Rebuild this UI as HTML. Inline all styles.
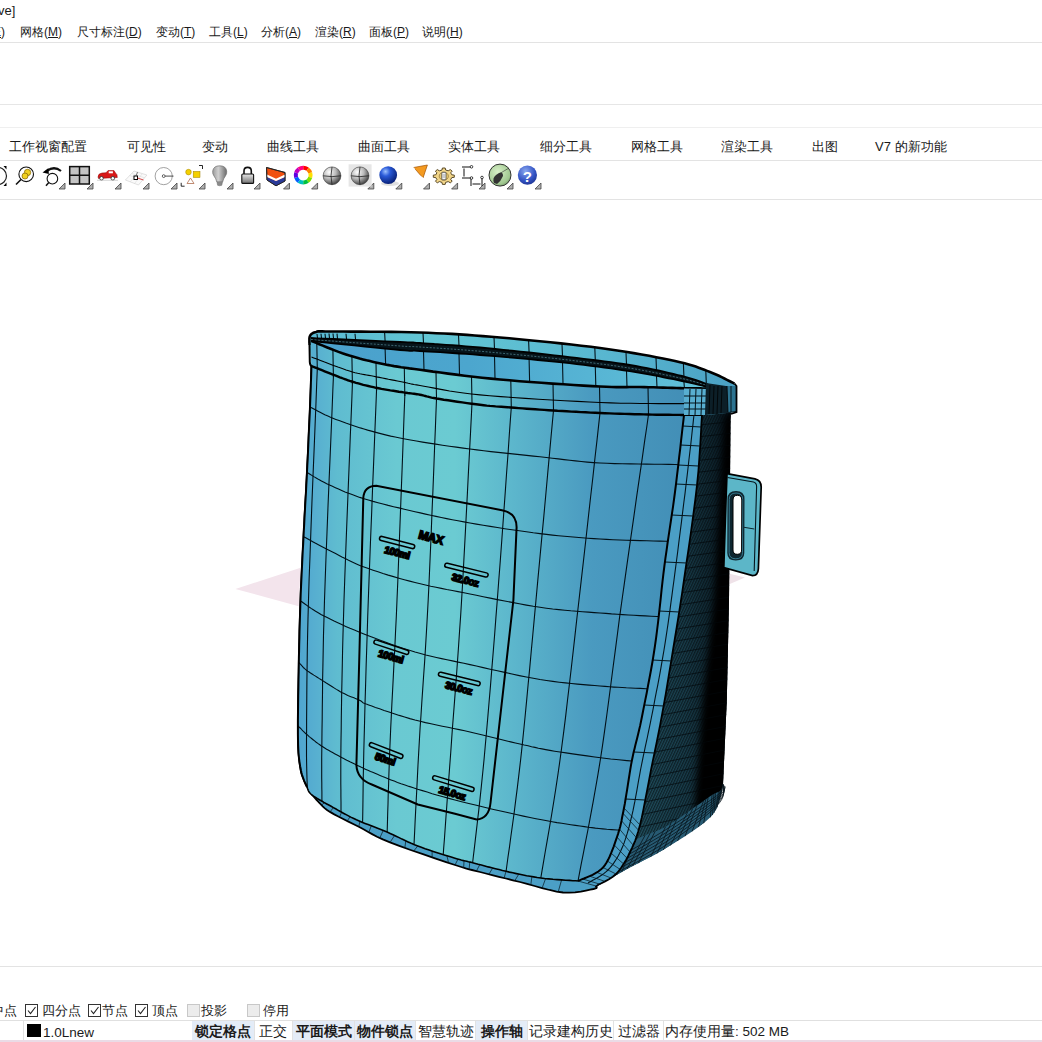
<!DOCTYPE html>
<html><head><meta charset="utf-8">
<style>
html,body{margin:0;padding:0;width:1042px;height:1042px;overflow:hidden;background:#fff;font-family:"Liberation Sans",sans-serif;color:#1a1a1a}
.t{position:absolute;white-space:nowrap;font-size:12px;line-height:14px}
.hl{position:absolute;left:0;width:1042px;height:1px;background:#e3e3e3}
.ic{position:absolute;top:163px;width:28px;height:30px}
.tri{position:absolute;width:0;height:0;border-left:5px solid transparent;border-bottom:5px solid #555}
.cb{position:absolute;top:1004px;width:11px;height:11px;border:1px solid #333;background:#fff}
.cb.d{border-color:#c8c8c8;background:#ececec}
.sb{position:absolute;top:1021px;height:19px;font-size:13.5px;line-height:22px;padding:0}
.sb.on{background:#e4ecf7;font-weight:bold}
.sep{position:absolute;top:1021px;width:1px;height:19px;background:#e2e2e2}
</style></head><body>
<!-- title -->
<div class="t" style="left:-2px;top:4px;font-size:13px">ve]</div>
<!-- menu -->
<div class="t" style="left:-11px;top:25px">(<u>E</u>)</div>
<div class="t" style="left:20px;top:25px">网格(<u>M</u>)</div>
<div class="t" style="left:77px;top:25px">尺寸标注(<u>D</u>)</div>
<div class="t" style="left:156px;top:25px">变动(<u>T</u>)</div>
<div class="t" style="left:209px;top:25px">工具(<u>L</u>)</div>
<div class="t" style="left:261px;top:25px">分析(<u>A</u>)</div>
<div class="t" style="left:315px;top:25px">渲染(<u>R</u>)</div>
<div class="t" style="left:369px;top:25px">面板(<u>P</u>)</div>
<div class="t" style="left:422px;top:25px">说明(<u>H</u>)</div>
<div class="hl" style="top:42px"></div>
<div class="hl" style="top:104px;background:#e6e6e6"></div>
<div class="hl" style="top:127px;background:#efefef"></div>
<!-- tabs -->
<div class="t" style="left:9px;top:140px;font-size:13px">工作视窗配置</div>
<div class="t" style="left:127px;top:140px;font-size:13px">可见性</div>
<div class="t" style="left:202px;top:140px;font-size:13px">变动</div>
<div class="t" style="left:267px;top:140px;font-size:13px">曲线工具</div>
<div class="t" style="left:358px;top:140px;font-size:13px">曲面工具</div>
<div class="t" style="left:448px;top:140px;font-size:13px">实体工具</div>
<div class="t" style="left:540px;top:140px;font-size:13px">细分工具</div>
<div class="t" style="left:631px;top:140px;font-size:13px">网格工具</div>
<div class="t" style="left:721px;top:140px;font-size:13px">渲染工具</div>
<div class="t" style="left:812px;top:140px;font-size:13px">出图</div>
<div class="t" style="left:875px;top:140px;font-size:13px">V7 的新功能</div>
<div class="hl" style="top:160px"></div>
<svg width="1042" height="40" viewBox="0 160 1042 40" style="position:absolute;left:0;top:160px">
<defs>
<radialGradient id="gs" cx="0.35" cy="0.3" r="0.75"><stop offset="0" stop-color="#fff"/><stop offset="0.5" stop-color="#b8b8b8"/><stop offset="1" stop-color="#3a3a3a"/></radialGradient>
<radialGradient id="gb" cx="0.35" cy="0.3" r="0.75"><stop offset="0" stop-color="#9cc0ff"/><stop offset="0.35" stop-color="#2a5ad8"/><stop offset="1" stop-color="#061c70"/></radialGradient>
<radialGradient id="gq" cx="0.4" cy="0.3" r="0.8"><stop offset="0" stop-color="#8aa8f0"/><stop offset="0.6" stop-color="#3454c4"/><stop offset="1" stop-color="#1a2e8a"/></radialGradient>
<radialGradient id="gg" cx="0.4" cy="0.35" r="0.8"><stop offset="0" stop-color="#d8f0c8"/><stop offset="0.7" stop-color="#a0c890"/><stop offset="1" stop-color="#5c7c50"/></radialGradient>
<linearGradient id="gl" x1="0" y1="0" x2="0" y2="1"><stop offset="0" stop-color="#e8e8e8"/><stop offset="1" stop-color="#707070"/></linearGradient>
<linearGradient id="gbulb" x1="0" y1="0" x2="1" y2="0"><stop offset="0" stop-color="#9a9a9a"/><stop offset="0.4" stop-color="#d0d0d0"/><stop offset="1" stop-color="#6a6a6a"/></linearGradient>
</defs>
<path d="M65.0,183 L65.0,189 L59.0,189 Z" fill="#b0b0b0" stroke="#444" stroke-width="0.8"/>
<path d="M93.0,183 L93.0,189 L87.0,189 Z" fill="#b0b0b0" stroke="#444" stroke-width="0.8"/>
<path d="M121.0,183 L121.0,189 L115.0,189 Z" fill="#b0b0b0" stroke="#444" stroke-width="0.8"/>
<path d="M149.0,183 L149.0,189 L143.0,189 Z" fill="#b0b0b0" stroke="#444" stroke-width="0.8"/>
<path d="M177.0,183 L177.0,189 L171.0,189 Z" fill="#b0b0b0" stroke="#444" stroke-width="0.8"/>
<path d="M205.0,183 L205.0,189 L199.0,189 Z" fill="#b0b0b0" stroke="#444" stroke-width="0.8"/>
<path d="M233.0,183 L233.0,189 L227.0,189 Z" fill="#b0b0b0" stroke="#444" stroke-width="0.8"/>
<path d="M260.0,183 L260.0,189 L254.0,189 Z" fill="#b0b0b0" stroke="#444" stroke-width="0.8"/>
<path d="M289.5,183 L289.5,189 L283.5,189 Z" fill="#b0b0b0" stroke="#444" stroke-width="0.8"/>
<path d="M317.6,183 L317.6,189 L311.6,189 Z" fill="#b0b0b0" stroke="#444" stroke-width="0.8"/>
<path d="M373.8,183 L373.8,189 L367.8,189 Z" fill="#b0b0b0" stroke="#444" stroke-width="0.8"/>
<path d="M401.8,183 L401.8,189 L395.8,189 Z" fill="#b0b0b0" stroke="#444" stroke-width="0.8"/>
<path d="M429.5,183 L429.5,189 L423.5,189 Z" fill="#b0b0b0" stroke="#444" stroke-width="0.8"/>
<path d="M457.6,183 L457.6,189 L451.6,189 Z" fill="#b0b0b0" stroke="#444" stroke-width="0.8"/>
<path d="M485.0,183 L485.0,189 L479.0,189 Z" fill="#b0b0b0" stroke="#444" stroke-width="0.8"/>
<path d="M513.0,183 L513.0,189 L507.0,189 Z" fill="#b0b0b0" stroke="#444" stroke-width="0.8"/>
<path d="M541.0,183 L541.0,189 L535.0,189 Z" fill="#b0b0b0" stroke="#444" stroke-width="0.8"/>
<path d="M-2,167.5 A8.5,8.5 0 0 1 -2,184.5" fill="none" stroke="#222" stroke-width="1.2"/>
<path d="M3.5,166 L6.5,166 L6.5,169.5 Z M3.5,186 L6.5,186 L6.5,182.5 Z" fill="#000"/>
<circle cx="26.2" cy="174.3" r="7.3" fill="#fff" stroke="#111" stroke-width="1.1"/>
<circle cx="27.5" cy="172.5" r="3.2" fill="#f0d020" stroke="#806000" stroke-width="0.7"/><circle cx="25" cy="176" r="3" fill="#f0d020" stroke="#806000" stroke-width="0.7"/>
<path d="M16,184.5 L21,179.5" stroke="#111" stroke-width="1.6"/>
<circle cx="52.4" cy="178.7" r="5.3" fill="#fff" stroke="#111" stroke-width="1.1"/>
<path d="M46,185.8 L48.8,182.6" stroke="#111" stroke-width="1.5"/>
<path d="M47,171 Q54,165.5 61,171" fill="none" stroke="#111" stroke-width="2.2"/>
<path d="M42.5,172.5 L48.5,168 L48.8,174 Z" fill="#000"/>
<rect x="69.7" y="166.6" width="19.6" height="17.4" fill="#c4c4c4" stroke="#111" stroke-width="1.5"/>
<path d="M79.5,166.6 L79.5,184 M69.7,175.3 L89.3,175.3" stroke="#111" stroke-width="1.5"/>
<path d="M98,177 Q98,173.5 102,173 L106,172.8 L108,170.6 L114,170.6 L115.5,173 Q117.5,174 117.3,177.5 L98.5,178.5 Z" fill="#d81818" stroke="#8a0000" stroke-width="0.5"/>
<rect x="108.7" y="171.3" width="4.2" height="2" fill="#fff"/>
<circle cx="101.5" cy="178.3" r="1.8" fill="#fff" stroke="#333" stroke-width="0.9"/><circle cx="112.8" cy="178.3" r="1.8" fill="#fff" stroke="#333" stroke-width="0.9"/>
<path d="M97,180.3 L118,180.3" stroke="#bbb" stroke-width="0.6"/>
<path d="M125.4,180 L134,171 L146.9,175 L138.5,185 Z" fill="#fafafa" stroke="#ccc" stroke-width="0.6"/>
<path d="M129.7,175.5 L142.7,180 M132,173.5 L144.5,177.8 M130,182 L138,173 M134.5,183.5 L142,174" stroke="#d4d4d4" stroke-width="0.5"/>
<rect x="134" y="176" width="3.5" height="3.5" fill="#fff" stroke="#000" stroke-width="1"/>
<path d="M137.5,178 L143.5,180" stroke="#d02020" stroke-width="0.8"/><path d="M136,176 L137.5,172" stroke="#333" stroke-width="0.6"/>
<circle cx="163.7" cy="176.1" r="8.6" fill="none" stroke="#8a8a8a" stroke-width="0.8"/>
<circle cx="163.7" cy="176.1" r="1.4" fill="#fff" stroke="#222" stroke-width="0.7"/><path d="M165.1,176.1 L173.5,176.1" stroke="#222" stroke-width="0.8"/>
<circle cx="188.5" cy="172.1" r="2.8" fill="#f4d000" stroke="#a08000" stroke-width="0.5"/>
<rect x="193.2" y="171.4" width="6.8" height="6.1" fill="#f4d000" stroke="#a08000" stroke-width="0.5"/>
<path d="M187,183.5 L190.5,178 L194,183.5 Z" fill="none" stroke="#b07050" stroke-width="0.8"/>
<path d="M199,165.5 L202.5,165.5 L202.5,169 M181.2,182.8 L181.2,186.2 L184.6,186.2" fill="none" stroke="#111" stroke-width="0.9"/>
<path d="M216.8,182 Q216,178.5 214,176 Q212.3,173.5 212.7,171 Q213.5,165.8 219.7,165.8 Q225.9,165.8 226.7,171 Q227.1,173.5 225.4,176 Q223.4,178.5 222.6,182 Z" fill="url(#gbulb)" stroke="#707070" stroke-width="0.7"/>
<path d="M217,182.2 L222.4,182.2 L221.8,185.3 Q219.7,186.2 217.6,185.3 Z" fill="#8a8a8a" stroke="#666" stroke-width="0.5"/>
<path d="M244,174 L244,171 Q244,167.4 247.6,167.4 Q251.3,167.4 251.3,171 L251.3,174" fill="none" stroke="#111" stroke-width="1.6"/>
<rect x="241.8" y="174" width="11.8" height="9.4" rx="1" fill="url(#gl)" stroke="#111" stroke-width="1.1"/>
<path d="M266.5,167.5 L285,172.5 L285,181 L276,185.8 L267,180 Z" fill="#f05010" stroke="#222" stroke-width="0.9"/>
<path d="M267,177 L276,181 L285,177 L285,181 L276,185.8 L267,180 Z" fill="#2a3a98"/>
<path d="M267,174.5 L276,178.8 L285,174.5 L285,177 L276,181 L267,177 Z" fill="#fff"/>
<path d="M266.5,167.5 L285,172.5 L285,181 L276,185.8 L267,180 Z" fill="none" stroke="#222" stroke-width="0.9"/>
<path d="M303.20,167.70 A7.4,7.4 0 0 1 307.55,169.11" fill="none" stroke="#ff0000" stroke-width="4"/>
<path d="M307.55,169.11 A7.4,7.4 0 0 1 310.24,172.81" fill="none" stroke="#ff8000" stroke-width="4"/>
<path d="M310.24,172.81 A7.4,7.4 0 0 1 310.24,177.39" fill="none" stroke="#ffe000" stroke-width="4"/>
<path d="M310.24,177.39 A7.4,7.4 0 0 1 307.55,181.09" fill="none" stroke="#80e000" stroke-width="4"/>
<path d="M307.55,181.09 A7.4,7.4 0 0 1 303.20,182.50" fill="none" stroke="#00c040" stroke-width="4"/>
<path d="M303.20,182.50 A7.4,7.4 0 0 1 298.85,181.09" fill="none" stroke="#00c0c0" stroke-width="4"/>
<path d="M298.85,181.09 A7.4,7.4 0 0 1 296.16,177.39" fill="none" stroke="#0060ff" stroke-width="4"/>
<path d="M296.16,177.39 A7.4,7.4 0 0 1 296.16,172.81" fill="none" stroke="#6000e0" stroke-width="4"/>
<path d="M296.16,172.81 A7.4,7.4 0 0 1 298.85,169.11" fill="none" stroke="#c000c0" stroke-width="4"/>
<path d="M298.85,169.11 A7.4,7.4 0 0 1 303.20,167.70" fill="none" stroke="#ff0080" stroke-width="4"/>
<circle cx="332" cy="175.8" r="8.9" fill="url(#gs)" stroke="#333" stroke-width="0.6"/>
<path d="M332,167 Q330,175.8 332,184.7 M323.1,175.8 Q332,177.5 340.9,175.8" fill="none" stroke="#222" stroke-width="0.8"/>
<rect x="348.6" y="164.3" width="23" height="22.3" fill="#e6e6e6"/>
<circle cx="360" cy="175.8" r="8.9" fill="url(#gs)" stroke="#333" stroke-width="0.6"/>
<path d="M360,167 Q358,175.8 360,184.7 M351.1,175.8 Q360,177.5 368.9,175.8" fill="none" stroke="#222" stroke-width="0.8"/>
<ellipse cx="390" cy="183.5" rx="9" ry="2.5" fill="#ccc" opacity="0.6"/>
<circle cx="388.2" cy="175.1" r="8.9" fill="url(#gb)"/>
<path d="M413.7,167.5 L427.4,165 L423,178 Z" fill="#f49a20" stroke="#a05000" stroke-width="0.7"/>
<path d="M413.7,167.5 Q416,174 423,178" fill="none" stroke="#fff" stroke-width="1"/>
<polygon points="451.8,174.8 454.3,175.1 454.3,177.3 451.8,177.6 450.7,179.6 452.2,181.2 450.3,182.8 448.2,181.6 445.6,182.4 445.2,184.4 442.4,184.4 442.0,182.4 439.4,181.6 437.3,182.8 435.4,181.2 436.9,179.6 435.8,177.6 433.3,177.3 433.3,175.1 435.8,174.8 436.9,172.8 435.4,171.2 437.3,169.6 439.4,170.8 442.0,170.0 442.4,168.0 445.2,168.0 445.6,170.0 448.2,170.8 450.3,169.6 452.2,171.2 450.7,172.8" fill="#f2d68a" stroke="#4a3a18" stroke-width="0.9" stroke-linejoin="round"/>
<ellipse cx="443.8" cy="176.2" rx="4.6" ry="4" fill="#e8c870" stroke="#6a5020" stroke-width="0.5"/>
<rect x="441.8" y="172.3" width="4.2" height="7.5" rx="0.8" fill="#f4f4f4" stroke="#333" stroke-width="0.7"/>
<path d="M442.8,175 L445,175 M442.8,177 L445,177" stroke="#555" stroke-width="0.5"/>
<path d="M462,167 L471,167 M462,178 L471,178 M464,168.5 L464,176.5 M471,178 L471,186 M482,178 L482,186 M472.5,184 L480.5,184" stroke="#111" stroke-width="1" fill="none"/>
<circle cx="471.5" cy="166.8" r="1.3" fill="#fff" stroke="#111" stroke-width="0.8"/><circle cx="471.5" cy="178" r="1.3" fill="#fff" stroke="#111" stroke-width="0.8"/><circle cx="482" cy="177.5" r="1.3" fill="#fff" stroke="#111" stroke-width="0.8"/>
<circle cx="500" cy="175.1" r="11" fill="url(#gg)" stroke="#333" stroke-width="1"/>
<path d="M494,183 Q492,178 496,175 L499,173 Q503,171 503,176 Q501,181 497,184 Z" fill="#333"/>
<path d="M499,174 L509,168" stroke="#333" stroke-width="0.6"/>
<circle cx="527.4" cy="175.1" r="9.6" fill="url(#gq)"/>
<text x="527.4" y="181.5" font-family="Liberation Sans" font-weight="bold" font-size="15" fill="#fff" text-anchor="middle">?</text>
</svg>
<div class="hl" style="top:199px"></div>
<div class="hl" style="top:966px"></div>
<!-- osnap row -->
<div class="t" style="left:-9px;top:1004px;font-size:13px">中点</div>
<div class="cb" style="left:25px"><svg width="11" height="11" style="position:absolute;left:0;top:0"><path d="M2,5.5 L4.5,8.5 L9.5,2" fill="none" stroke="#222" stroke-width="1.1"/></svg></div><div class="t" style="left:42px;top:1004px;font-size:13px">四分点</div>
<div class="cb" style="left:88px"><svg width="11" height="11" style="position:absolute;left:0;top:0"><path d="M2,5.5 L4.5,8.5 L9.5,2" fill="none" stroke="#222" stroke-width="1.1"/></svg></div><div class="t" style="left:102px;top:1004px;font-size:13px">节点</div>
<div class="cb" style="left:135px"><svg width="11" height="11" style="position:absolute;left:0;top:0"><path d="M2,5.5 L4.5,8.5 L9.5,2" fill="none" stroke="#222" stroke-width="1.1"/></svg></div><div class="t" style="left:152px;top:1004px;font-size:13px">顶点</div>
<div class="cb d" style="left:187px"></div><div class="t" style="left:201px;top:1004px;font-size:13px">投影</div>
<div class="cb d" style="left:247px"></div><div class="t" style="left:263px;top:1004px;font-size:13px">停用</div>
<div class="hl" style="top:1020px;background:#e0e0e0"></div>
<!-- status bar -->
<div class="sep" style="left:23px"></div>
<div style="position:absolute;left:27px;top:1024px;width:14px;height:13px;background:#000"></div>
<div class="sb" style="left:43px;top:1022px">1.0Lnew</div>
<div class="sb on" style="left:192px;width:62px;text-align:center">锁定格点</div>
<div class="sep" style="left:254px"></div>
<div class="sb" style="left:254px;width:38px;text-align:center">正交</div>
<div class="sep" style="left:292px"></div>
<div class="sb on" style="left:293px;width:61px;text-align:center">平面模式</div>
<div class="sep" style="left:354px"></div>
<div class="sb on" style="left:355px;width:60px;text-align:center">物件锁点</div>
<div class="sep" style="left:415px"></div>
<div class="sb" style="left:416px;width:59px;text-align:center">智慧轨迹</div>
<div class="sep" style="left:475px"></div>
<div class="sb on" style="left:476px;width:51px;text-align:center">操作轴</div>
<div class="sep" style="left:527px"></div>
<div class="sb" style="left:528px;width:85px;text-align:center">记录建构历史</div>
<div class="sep" style="left:613px"></div>
<div class="sb" style="left:614px;width:49px;text-align:center">过滤器</div>
<div class="sep" style="left:663px"></div>
<div class="sb" style="left:665px">内存使用量: 502 MB</div>
<div style="position:absolute;left:0;top:1040px;width:1042px;height:2px;background:#eadbe6"></div>
<svg width="1042" height="1042" viewBox="0 0 1042 1042" style="position:absolute;left:0;top:0">
<defs>
<linearGradient id="gF" x1="298" y1="0" x2="690" y2="0" gradientUnits="userSpaceOnUse">
<stop offset="0" stop-color="#4fa5d0"/><stop offset="0.05" stop-color="#58b0d0"/><stop offset="0.1" stop-color="#5fbcd0"/><stop offset="0.25" stop-color="#6ac9d2"/><stop offset="0.4" stop-color="#6bcbd2"/><stop offset="0.55" stop-color="#5cb6cc"/><stop offset="0.75" stop-color="#4a9ac0"/><stop offset="1" stop-color="#428eb6"/>
</linearGradient>
<linearGradient id="gD" x1="640" y1="0" x2="729" y2="0" gradientUnits="userSpaceOnUse">
<stop offset="0" stop-color="#21505f"/><stop offset="0.5" stop-color="#193e4c"/><stop offset="0.8" stop-color="#0f2630"/><stop offset="1" stop-color="#06121a"/>
</linearGradient>
<linearGradient id="gR" x1="300" y1="0" x2="740" y2="0" gradientUnits="userSpaceOnUse">
<stop offset="0" stop-color="#5ab8d2"/><stop offset="0.3" stop-color="#62c6d4"/><stop offset="0.7" stop-color="#58b6d0"/><stop offset="1" stop-color="#4aa0c4"/>
</linearGradient>
<pattern id="hatch" width="2.4" height="6" patternUnits="userSpaceOnUse" patternTransform="rotate(25)">
<rect width="2.4" height="6" fill="none"/><rect x="0" width="1.2" height="6" fill="#03090c" opacity="0.6"/>
</pattern>
<linearGradient id="gW" x1="311" y1="0" x2="707" y2="0" gradientUnits="userSpaceOnUse">
<stop offset="0" stop-color="#4aa0cc"/><stop offset="0.4" stop-color="#4ca6ce"/><stop offset="0.7" stop-color="#56b4d4"/><stop offset="1" stop-color="#62c2d8"/>
</linearGradient>
<clipPath id="cF"><path d="M311.5,366.0 L314.1,367.0 L317.7,368.5 L321.9,370.2 L326.4,372.0 L330.7,373.7 L334.5,375.2 L337.6,376.4 L340.4,377.5 L343.1,378.5 L345.7,379.5 L348.6,380.5 L351.8,381.5 L355.4,382.6 L359.2,383.7 L363.3,384.8 L367.4,385.8 L371.7,386.8 L376.0,387.8 L380.5,388.7 L385.4,389.5 L390.3,390.4 L395.2,391.1 L399.7,391.8 L403.7,392.4 L407.1,392.9 L410.0,393.3 L412.5,393.6 L415.0,393.9 L417.4,394.3 L420.0,394.7 L422.4,395.2 L424.5,395.8 L426.6,396.4 L429.0,397.0 L432.2,397.7 L436.5,398.5 L442.3,399.4 L449.5,400.5 L457.3,401.7 L465.4,402.9 L473.2,403.9 L480.0,404.8 L485.8,405.5 L490.9,406.0 L495.6,406.4 L500.3,406.7 L505.3,407.1 L511.0,407.5 L517.3,408.0 L524.0,408.5 L531.0,409.0 L538.2,409.5 L545.6,410.0 L553.0,410.5 L560.5,411.0 L568.3,411.4 L576.1,411.8 L584.1,412.3 L592.1,412.6 L600.0,413.0 L608.1,413.3 L616.4,413.6 L624.7,413.9 L632.9,414.1 L640.7,414.3 L648.0,414.5 L655.1,414.6 L662.2,414.8 L669.0,414.8 L675.1,414.9 L680.2,415.0 L684.0,415.0 L682.9,422.3 L681.4,432.2 L679.6,444.1 L677.7,457.2 L675.7,471.1 L673.7,485.0 L671.7,499.7 L669.5,515.7 L667.3,532.5 L665.0,549.3 L662.9,565.3 L661.0,580.0 L659.3,593.3 L657.8,605.9 L656.4,617.8 L655.0,629.1 L653.6,639.8 L652.0,650.0 L650.3,659.4 L648.4,667.8 L646.5,675.6 L644.6,683.3 L642.7,691.3 L641.0,700.0 L639.4,709.6 L637.8,719.7 L636.3,730.1 L634.9,740.5 L633.4,750.6 L632.0,760.0 L630.6,768.9 L629.2,777.6 L627.9,785.9 L626.6,793.9 L625.3,801.2 L624.0,808.0 L622.9,813.9 L621.9,819.0 L620.9,823.6 L619.8,827.9 L618.6,832.3 L617.0,837.0 L615.2,842.2 L613.3,847.7 L611.1,853.2 L608.7,858.5 L606.1,863.4 L603.0,867.5 L599.2,870.9 L594.6,873.8 L589.6,876.2 L584.9,878.1 L580.8,879.7 L578.0,881.0 L573.9,880.7 L568.3,880.4 L561.6,879.9 L554.4,879.4 L547.3,878.7 L540.8,878.0 L534.8,877.1 L529.0,876.1 L523.2,875.0 L517.4,873.8 L511.7,872.6 L506.0,871.3 L500.2,869.9 L494.2,868.4 L488.2,866.9 L482.5,865.3 L477.2,863.9 L472.6,862.7 L469.0,861.8 L466.3,861.2 L464.0,860.7 L461.7,860.1 L458.9,859.3 L455.0,858.2 L449.9,856.6 L443.8,854.8 L437.2,852.7 L430.4,850.5 L423.9,848.2 L417.8,846.0 L412.3,843.8 L407.1,841.4 L402.0,839.1 L397.1,836.7 L392.1,834.3 L387.1,832.1 L381.9,830.0 L376.6,827.9 L371.3,825.8 L366.1,823.8 L361.1,821.8 L356.4,819.8 L352.1,817.8 L348.1,815.7 L344.3,813.7 L340.7,811.7 L337.1,809.7 L333.4,807.6 L329.6,805.5 L325.5,803.3 L321.6,801.0 L317.9,798.9 L314.6,796.8 L312.0,795.0 L310.2,793.3 L308.9,791.7 L308.2,790.2 L307.7,788.9 L307.4,787.8 L307.0,787.0 L306.3,785.4 L305.3,783.3 L304.2,780.8 L303.0,777.8 L301.9,774.4 L301.0,770.7 L300.3,766.9 L299.6,763.2 L299.1,759.1 L298.6,754.1 L298.2,747.9 L298.0,740.0 L297.9,729.8 L298.0,717.6 L298.1,704.1 L298.3,690.1 L298.6,676.5 L298.8,664.0 L299.0,652.6 L299.3,641.7 L299.5,631.2 L299.8,620.8 L300.1,610.5 L300.5,600.0 L300.9,589.5 L301.4,579.0 L301.9,568.6 L302.4,558.1 L303.0,547.6 L303.5,537.0 L304.1,526.3 L304.6,515.5 L305.2,504.6 L305.9,493.7 L306.4,482.9 L307.0,472.0 L307.5,460.9 L308.1,449.5 L308.6,438.0 L309.1,426.9 L309.6,416.5 L310.0,407.0 L310.4,398.2 L310.7,389.9 L310.9,382.2 L311.2,375.4 L311.4,369.7Z"/></clipPath>
</defs>
<polygon points="235.4,589 300.6,567.8 298.7,606.2" fill="#f3e4ec"/>
<polygon points="728.8,573.6 745,577.4 729.8,584" fill="#efe2e8"/>
<path d="M700.0,412.0 L731.0,412.0 L730.5,420.0 L729.0,600.0 L726.8,700.0 L723.0,784.5 L717.0,807.5 L703.7,823.0 L663.4,849.8 L627.0,869.0 L600.0,884.4 L593.5,888.6 L563.0,891.8 L590.0,870.0 L640.0,700.0 L690.0,415.0Z" fill="url(#gD)"/>
<path d="M700.0,412.0 L731.0,412.0 L730.5,420.0 L729.0,600.0 L726.8,700.0 L723.0,784.5 L717.0,807.5 L703.7,823.0 L663.4,849.8 L627.0,869.0 L600.0,884.4 L593.5,888.6 L563.0,891.8 L590.0,870.0 L640.0,700.0 L690.0,415.0Z" fill="url(#hatch)"/>
<filter id="blk" x="-50%" y="-10%" width="200%" height="120%"><feGaussianBlur stdDeviation="3"/></filter>
<g clip-path="url(#cDk0)"><path d="M740,405 L740,840 L703,826 L694,815 L703,700 L714,600 L724,418 Z" fill="#000" filter="url(#blk)"/></g>
<clipPath id="cDk0"><path d="M700.0,412.0 L731.0,412.0 L730.5,420.0 L729.0,600.0 L726.8,700.0 L723.0,784.5 L717.0,807.5 L703.7,823.0 L663.4,849.8 L627.0,869.0 L600.0,884.4 L593.5,888.6 L563.0,891.8 L590.0,870.0 L640.0,700.0 L690.0,415.0Z"/></clipPath>
<clipPath id="cDk"><path d="M700.0,412.0 L731.0,412.0 L730.5,420.0 L729.0,600.0 L726.8,700.0 L723.0,784.5 L717.0,807.5 L703.7,823.0 L663.4,849.8 L627.0,869.0 L600.0,884.4 L593.5,888.6 L563.0,891.8 L590.0,870.0 L640.0,700.0 L690.0,415.0Z"/></clipPath>
<path d="M640.0,431.0 L740.0,420.8 M640.0,443.0 L740.0,432.4 M640.0,455.0 L740.0,444.1 M640.0,467.0 L740.0,455.8 M640.0,479.0 L740.0,467.4 M640.0,491.0 L740.0,479.1 M640.0,503.0 L740.0,490.7 M640.0,515.0 L740.0,502.4 M640.0,527.0 L740.0,514.0 M640.0,539.0 L740.0,525.6 M640.0,551.0 L740.0,537.3 M640.0,563.0 L740.0,548.9 M640.0,575.0 L740.0,560.6 M640.0,587.0 L740.0,572.2 M640.0,599.0 L740.0,583.9 M640.0,611.0 L740.0,595.5 M640.0,623.0 L740.0,607.2 M640.0,635.0 L740.0,618.8 M640.0,647.0 L740.0,630.5 M640.0,659.0 L740.0,642.1 M640.0,671.0 L740.0,653.8 M640.0,683.0 L740.0,665.4 M640.0,695.0 L740.0,677.1 M640.0,707.0 L740.0,688.8 M640.0,719.0 L740.0,700.4 M640.0,731.0 L740.0,712.0 M640.0,743.0 L740.0,723.7 M640.0,755.0 L740.0,735.3 M640.0,767.0 L740.0,747.0 M640.0,779.0 L740.0,758.6 M640.0,791.0 L740.0,770.3 M640.0,803.0 L740.0,781.9 M640.0,815.0 L740.0,793.6 M640.0,827.0 L740.0,805.2 M640.0,839.0 L740.0,816.9" stroke="#03070a" stroke-width="0.9" opacity="0.75" fill="none" clip-path="url(#cDk)"/>
<path d="M616.0,856.0 L618.1,854.1 L620.8,851.6 L624.1,848.5 L627.9,845.3 L631.9,842.1 L636.0,839.4 L640.4,837.2 L645.1,835.2 L650.1,833.3 L655.2,831.4 L660.5,829.3 L665.6,826.7 L670.9,823.5 L676.5,819.9 L682.2,816.0 L687.7,812.2 L692.7,808.6 L697.0,805.6 L700.5,803.2 L703.5,801.1 L705.9,799.2 L708.1,797.7 L710.1,796.3 L712.0,795.0 L713.9,794.0 L715.5,793.2 L717.0,792.6 L718.4,792.1 L719.5,791.5 L720.5,790.8 L721.3,789.8 L721.9,788.6 L722.3,787.4 L722.6,786.2 L722.8,785.2 L723.0,784.5 L723.0,784.5 L722.4,787.1 L721.7,790.7 L720.8,795.0 L719.8,799.5 L718.5,803.8 L717.0,807.5 L715.5,810.4 L714.1,812.8 L712.5,815.0 L710.4,817.3 L707.6,819.8 L703.7,823.0 L698.5,826.9 L692.1,831.4 L685.0,836.2 L677.5,841.0 L670.2,845.6 L663.4,849.8 L657.0,853.5 L650.6,856.9 L644.4,860.1 L638.3,863.2 L632.5,866.1 L627.0,869.0 L621.6,872.0 L616.3,875.0 L611.2,877.9 L606.7,880.5 L602.8,882.8 L600.0,884.4Z" fill="#275a72"/>
<path d="M613.7,860.1 L616.8,858.3 L620.7,856.1 L625.3,853.5 L630.5,850.5 L636.1,847.3 L642.0,844.0 L648.0,840.5 L653.9,836.9 L659.8,833.4 L665.3,830.0 L670.9,826.5 L676.9,822.6 L683.1,818.6 L689.4,814.4 L695.7,810.3 L701.7,806.2 L707.3,802.4 L712.3,798.9 L716.6,795.8 L720.0,793.2 L722.4,791.1 L724.0,789.5 L724.8,788.2 L725.1,787.3 L724.9,786.5 L724.5,786.0 L723.9,785.6 L723.4,785.2 L723.1,784.9 L723.0,784.5 M611.4,864.1 L614.6,862.3 L618.7,860.0 L623.5,857.4 L628.9,854.3 L634.8,851.1 L640.9,847.6 L647.1,844.0 L653.3,840.4 L659.3,836.8 L665.0,833.3 L670.6,829.7 L676.6,825.8 L682.9,821.6 L689.2,817.4 L695.4,813.2 L701.3,809.1 L706.9,805.1 L711.8,801.5 L716.1,798.3 L719.5,795.6 L721.9,793.3 L723.5,791.5 L724.4,789.9 L724.7,788.7 L724.7,787.7 L724.3,786.9 L723.8,786.2 L723.3,785.6 L723.0,785.0 L723.0,784.5 M609.1,868.2 L612.5,866.3 L616.7,864.0 L621.8,861.2 L627.4,858.2 L633.5,854.8 L639.9,851.3 L646.3,847.6 L652.7,843.9 L658.9,840.2 L664.7,836.6 L670.4,832.9 L676.4,828.9 L682.6,824.7 L688.9,820.4 L695.0,816.1 L700.9,811.9 L706.4,807.9 L711.4,804.2 L715.6,800.8 L719.0,798.0 L721.5,795.5 L723.1,793.4 L724.0,791.6 L724.4,790.1 L724.4,788.8 L724.1,787.7 L723.7,786.8 L723.3,785.9 L723.0,785.2 L723.0,784.5 M606.9,872.2 L610.3,870.3 L614.7,867.9 L620.0,865.1 L625.9,862.0 L632.2,858.5 L638.8,854.9 L645.5,851.1 L652.1,847.3 L658.5,843.6 L664.3,839.9 L670.1,836.1 L676.2,832.1 L682.4,827.8 L688.6,823.5 L694.7,819.1 L700.6,814.8 L706.0,810.7 L710.9,806.9 L715.1,803.4 L718.5,800.3 L721.0,797.7 L722.7,795.4 L723.6,793.3 L724.1,791.5 L724.1,789.9 L723.9,788.6 L723.5,787.3 L723.2,786.3 L723.0,785.3 L723.0,784.5 M604.6,876.3 L608.1,874.4 L612.7,871.9 L618.2,869.0 L624.3,865.8 L630.9,862.3 L637.8,858.6 L644.7,854.7 L651.5,850.8 L658.0,847.0 L664.0,843.2 L669.9,839.4 L676.0,835.2 L682.2,830.9 L688.4,826.5 L694.4,822.0 L700.2,817.7 L705.6,813.5 L710.4,809.5 L714.6,805.9 L718.0,802.7 L720.5,799.9 L722.2,797.4 L723.3,795.1 L723.8,793.0 L723.9,791.1 L723.7,789.4 L723.4,787.9 L723.1,786.6 L722.9,785.5 L723.0,784.5 M602.3,880.3 L606.0,878.4 L610.8,875.9 L616.4,872.9 L622.8,869.6 L629.6,866.0 L636.7,862.2 L643.9,858.3 L650.9,854.3 L657.6,850.3 L663.7,846.5 L669.6,842.6 L675.7,838.4 L681.9,834.0 L688.1,829.5 L694.1,825.0 L699.8,820.5 L705.2,816.2 L710.0,812.2 L714.1,808.4 L717.5,805.1 L720.0,802.1 L721.8,799.3 L722.9,796.8 L723.4,794.4 L723.6,792.2 L723.5,790.3 L723.3,788.5 L723.0,787.0 L722.9,785.6 L723.0,784.5 M616.0,856.0 L600.0,884.4 M618.1,854.1 L602.8,882.8 M620.8,851.6 L606.7,880.5 M627.9,845.3 L611.2,877.9 M631.9,842.1 L616.3,875.0 M636.0,839.4 L621.6,872.0 M645.1,835.2 L627.0,869.0 M650.1,833.3 L632.5,866.1 M655.2,831.4 L638.3,863.2 M665.6,826.7 L650.6,856.9 M670.9,823.5 L657.0,853.5 M676.5,819.9 L663.4,849.8 M687.7,812.2 L670.2,845.6 M692.7,808.6 L677.5,841.0 M697.0,805.6 L685.0,836.2 M703.5,801.1 L692.1,831.4 M705.9,799.2 L698.5,826.9 M708.1,797.7 L703.7,823.0 M712.0,795.0 L710.4,817.3 M713.9,794.0 L712.5,815.0 M715.5,793.2 L714.1,812.8 M718.4,792.1 L715.5,810.4 M719.5,791.5 L717.0,807.5 M720.5,790.8 L718.5,803.8 M721.9,788.6 L719.8,799.5 M722.3,787.4 L720.8,795.0 M722.6,786.2 L721.7,790.7 M723.0,784.5 L723.0,784.5" stroke="#06141c" stroke-width="0.8" fill="none"/>
<path d="M311.5,366.0 L314.1,367.0 L317.7,368.5 L321.9,370.2 L326.4,372.0 L330.7,373.7 L334.5,375.2 L337.6,376.4 L340.4,377.5 L343.1,378.5 L345.7,379.5 L348.6,380.5 L351.8,381.5 L355.4,382.6 L359.2,383.7 L363.3,384.8 L367.4,385.8 L371.7,386.8 L376.0,387.8 L380.5,388.7 L385.4,389.5 L390.3,390.4 L395.2,391.1 L399.7,391.8 L403.7,392.4 L407.1,392.9 L410.0,393.3 L412.5,393.6 L415.0,393.9 L417.4,394.3 L420.0,394.7 L422.4,395.2 L424.5,395.8 L426.6,396.4 L429.0,397.0 L432.2,397.7 L436.5,398.5 L442.3,399.4 L449.5,400.5 L457.3,401.7 L465.4,402.9 L473.2,403.9 L480.0,404.8 L485.8,405.5 L490.9,406.0 L495.6,406.4 L500.3,406.7 L505.3,407.1 L511.0,407.5 L517.3,408.0 L524.0,408.5 L531.0,409.0 L538.2,409.5 L545.6,410.0 L553.0,410.5 L560.5,411.0 L568.3,411.4 L576.1,411.8 L584.1,412.3 L592.1,412.6 L600.0,413.0 L608.1,413.3 L616.4,413.6 L624.7,413.9 L632.9,414.1 L640.7,414.3 L648.0,414.5 L655.1,414.6 L662.2,414.8 L669.0,414.8 L675.1,414.9 L680.2,415.0 L702.0,415.0 L702.0,415.0 L701.5,422.3 L701.0,432.2 L700.3,444.1 L699.4,457.2 L698.4,471.1 L697.0,485.0 L695.3,499.7 L693.2,515.7 L690.9,532.5 L688.5,549.3 L686.1,565.3 L684.0,580.0 L682.1,593.2 L680.2,605.4 L678.4,616.9 L676.6,628.0 L674.8,638.9 L673.0,650.0 L671.2,661.2 L669.3,672.4 L667.5,683.4 L665.7,694.3 L663.8,704.8 L662.0,715.0 L660.2,724.7 L658.3,734.1 L656.5,743.1 L654.7,752.0 L652.8,760.9 L651.0,770.0 L649.2,779.5 L647.3,789.4 L645.4,799.2 L643.6,808.7 L641.8,817.5 L640.0,825.0 L638.3,831.2 L636.7,836.3 L635.2,840.6 L633.6,844.4 L631.9,848.1 L630.0,852.0 L628.0,856.1 L625.9,860.1 L623.6,863.9 L621.3,867.6 L618.7,871.0 L616.0,874.0 L612.8,876.7 L609.0,879.2 L605.1,881.4 L601.4,883.3 L598.2,884.8 L596.0,886.5 L596.1,886.8 L596.4,887.1 L596.7,887.5 L596.5,888.0 L595.6,888.5 L593.5,889.0 L590.2,889.7 L585.9,890.6 L580.8,891.6 L575.1,892.3 L569.1,892.7 L563.0,892.5 L556.5,891.6 L549.5,890.0 L542.1,888.1 L534.6,886.0 L527.1,883.9 L520.0,882.0 L513.0,880.3 L505.9,878.5 L498.9,876.8 L492.1,875.1 L485.8,873.5 L480.0,872.0 L475.4,870.8 L472.0,870.0 L469.1,869.3 L465.7,868.4 L461.3,867.0 L455.0,865.0 L446.1,862.1 L435.0,858.4 L422.9,854.2 L410.6,850.0 L399.3,845.9 L390.0,842.4 L382.8,839.4 L377.0,836.7 L372.1,834.1 L367.8,831.7 L363.5,829.3 L358.8,826.8 L353.7,824.2 L348.4,821.6 L343.2,819.0 L338.3,816.5 L333.8,814.1 L330.0,811.9 L327.0,809.9 L324.6,808.1 L322.7,806.4 L321.1,804.7 L319.6,803.1 L318.0,801.5 L316.5,799.8 L315.1,798.2 L313.8,796.6 L312.6,795.0 L311.5,793.4 L310.4,791.8 L309.4,790.2 L308.4,788.6 L307.5,787.0 L306.7,785.4 L305.8,783.6 L305.0,781.8 L304.2,780.0 L303.3,778.2 L302.5,776.4 L301.7,774.3 L301.0,771.8 L300.4,768.7 L299.8,764.5 L299.3,759.2 L298.9,753.5 L298.5,748.0 L298.2,743.3 L311.5,365.5 L311.4,369.7 L311.2,375.4 L310.9,382.2 L310.7,389.9 L310.4,398.2 L310.0,407.0 L309.6,416.5 L309.1,426.9 L308.6,438.0 L308.1,449.5 L307.5,460.9 L307.0,472.0 L306.4,482.9 L305.9,493.7 L305.2,504.6 L304.6,515.5 L304.1,526.3 L303.5,537.0 L303.0,547.6 L302.4,558.1 L301.9,568.6 L301.4,579.0 L300.9,589.5 L300.5,600.0 L300.1,610.5 L299.8,620.8 L299.5,631.2 L299.3,641.7 L299.0,652.6 L298.8,664.0 L298.6,676.5 L298.3,690.1 L298.1,704.1 L298.0,717.6 L297.9,729.8 L298.0,740.0 L298.2,747.9 L298.6,754.1 L299.1,759.1 L299.6,763.2 L300.3,766.9 L301.0,770.7 L301.9,774.4 L303.0,777.8 L304.2,780.8 L305.3,783.3 L306.3,785.4 L307.0,787.0Z" fill="#4b9fc6" stroke="#000" stroke-width="1.8"/>
<path d="M694.0,415.0 L693.5,419.1 L693.0,424.1 L692.3,430.1 L691.6,436.8 L690.8,444.1 L689.9,451.8 L688.9,460.0 L688.0,468.3 L687.0,476.7 L686.0,485.0 L685.0,493.6 L683.8,502.8 L682.6,512.5 L681.4,522.4 L680.1,532.5 L678.8,542.6 L677.6,552.5 L676.3,562.2 L675.1,571.4 L674.0,580.0 L672.9,588.0 L671.9,595.6 L670.9,602.9 L670.0,609.9 L669.0,616.8 L668.1,623.4 L667.1,630.0 L666.1,636.6 L665.1,643.2 L664.0,650.0 L662.8,656.9 L661.6,663.9 L660.4,670.9 L659.1,677.9 L657.8,684.9 L656.4,691.7 L655.1,698.4 L653.9,704.9 L652.7,711.1 L651.5,717.0 L650.4,722.6 L649.3,727.8 L648.3,732.7 L647.3,737.5 L646.3,742.1 L645.3,746.6 L644.4,751.1 L643.4,755.6 L642.5,760.2 L641.5,765.0 L640.5,770.0 L639.6,775.1 L638.6,780.4 L637.7,785.7 L636.8,790.9 L635.8,796.1 L634.9,801.2 L633.9,806.1 L633.0,810.7 L632.0,815.0 L631.0,819.0 L630.1,822.9 L629.2,826.5 L628.2,830.0 L627.3,833.2 L626.3,836.4 L625.3,839.4 L624.3,842.4 L623.2,845.2 L622.0,848.0 L620.8,850.7 L619.6,853.2 L618.3,855.7 L617.0,858.0 L615.6,860.2 L614.2,862.4 L612.8,864.4 L611.2,866.4 L609.7,868.2 L608.0,870.0 L606.2,871.7 L604.1,873.4 L601.8,875.0 L599.5,876.5 L597.1,877.9 L594.8,879.2 L592.7,880.3 L590.8,881.4 L589.2,882.3 L588.0,883.0" stroke="#04141c" stroke-width="1.1" fill="none"/>
<path d="M682.7,426.0 L701.2,427.0 M680.5,445.0 L699.9,446.0 M678.2,465.0 L698.4,466.0 M675.9,484.0 L697.1,485.0 M671.7,515.0 L692.9,516.0 M665.0,562.0 L686.5,563.0 M659.1,611.0 L679.1,612.0 M652.4,660.0 L671.3,661.0 M644.1,705.0 L663.7,706.0 M633.9,752.0 L654.6,753.0 M625.5,799.0 L645.2,800.0" stroke="#04141c" stroke-width="1" fill="none"/>
<path d="M624.0,808.0 L640.0,825.0 M622.9,813.2 L638.3,830.0 M621.4,820.6 L635.9,837.1 M619.4,829.0 L633.0,845.0 M617.0,837.0 L630.0,852.0 M614.2,844.9 L626.9,858.1 M611.1,853.2 L623.6,863.9 M607.4,861.0 L620.0,869.3 M603.0,867.5 L616.0,874.0 M596.9,872.4 L611.0,878.0 M589.6,876.2 L605.1,881.4 M582.8,879.0 L599.7,884.1 M578.0,881.0 L596.0,886.0" stroke="#04141c" stroke-width="0.7" fill="none"/>
<path d="M308.2,790.2 L308.9,789.4 M310.6,793.7 L311.2,793.0 M316.2,797.8 L315.7,799.0 M324.5,802.7 L321.4,805.2 M333.4,807.6 L330.0,811.9 M341.6,812.2 L339.5,817.1 M350.1,816.8 L347.1,821.0 M359.9,821.3 L358.8,826.8 M371.3,825.8 L368.8,832.3 M383.2,830.5 L379.8,838.0 M394.6,835.5 L390.0,842.4 M405.8,840.8 L404.8,847.9 M417.8,846.0 L413.7,851.0 M432.1,851.0 L432.1,857.4 M446.9,855.7 L448.6,862.9 M458.0,859.1 L455.0,865.0 M464.0,860.7 L463.7,867.8 M469.8,862.0 L469.1,869.3 M479.8,864.6 L476.4,871.1 M492.7,868.0 L488.9,874.3 M506.0,871.3 L504.1,878.1 M518.8,874.1 L514.8,880.7 M531.9,876.6 L530.8,884.9 M545.6,878.6 L542.1,888.1 M561.6,879.9 L558.2,891.9" stroke="#05161e" stroke-width="0.7" fill="none"/>
<path d="M311.5,366.0 L314.1,367.0 L317.7,368.5 L321.9,370.2 L326.4,372.0 L330.7,373.7 L334.5,375.2 L337.6,376.4 L340.4,377.5 L343.1,378.5 L345.7,379.5 L348.6,380.5 L351.8,381.5 L355.4,382.6 L359.2,383.7 L363.3,384.8 L367.4,385.8 L371.7,386.8 L376.0,387.8 L380.5,388.7 L385.4,389.5 L390.3,390.4 L395.2,391.1 L399.7,391.8 L403.7,392.4 L407.1,392.9 L410.0,393.3 L412.5,393.6 L415.0,393.9 L417.4,394.3 L420.0,394.7 L422.4,395.2 L424.5,395.8 L426.6,396.4 L429.0,397.0 L432.2,397.7 L436.5,398.5 L442.3,399.4 L449.5,400.5 L457.3,401.7 L465.4,402.9 L473.2,403.9 L480.0,404.8 L485.8,405.5 L490.9,406.0 L495.6,406.4 L500.3,406.7 L505.3,407.1 L511.0,407.5 L517.3,408.0 L524.0,408.5 L531.0,409.0 L538.2,409.5 L545.6,410.0 L553.0,410.5 L560.5,411.0 L568.3,411.4 L576.1,411.8 L584.1,412.3 L592.1,412.6 L600.0,413.0 L608.1,413.3 L616.4,413.6 L624.7,413.9 L632.9,414.1 L640.7,414.3 L648.0,414.5 L655.1,414.6 L662.2,414.8 L669.0,414.8 L675.1,414.9 L680.2,415.0 L684.0,415.0 L683.0,423.4 L681.7,435.1 L680.2,448.9 L678.5,463.7 L676.7,478.4 L675.0,492.0 L673.3,504.4 L671.5,516.7 L669.7,528.8 L667.9,541.0 L666.1,553.4 L664.4,566.0 L662.8,579.0 L661.3,592.3 L659.9,605.8 L658.4,619.3 L656.8,632.7 L655.0,645.7 L652.9,658.8 L650.6,672.1 L648.1,685.3 L645.7,698.0 L643.4,709.7 L641.3,720.0 L639.5,728.6 L637.8,735.6 L636.3,741.6 L634.8,747.3 L633.4,753.3 L632.0,760.0 L630.6,767.8 L629.2,776.1 L627.9,784.7 L626.5,793.1 L625.3,801.0 L624.0,808.0 L622.9,813.9 L621.9,819.0 L620.9,823.6 L619.8,827.9 L618.6,832.3 L617.0,837.0 L615.2,842.2 L613.3,847.7 L611.1,853.2 L608.7,858.5 L606.1,863.4 L603.0,867.5 L599.2,870.9 L594.6,873.8 L589.6,876.2 L584.9,878.1 L580.8,879.7 L578.0,881.0 L573.9,880.7 L568.3,880.4 L561.6,879.9 L554.4,879.4 L547.3,878.7 L540.8,878.0 L534.8,877.1 L529.0,876.1 L523.2,875.0 L517.4,873.8 L511.7,872.6 L506.0,871.3 L500.2,869.9 L494.2,868.4 L488.2,866.9 L482.5,865.3 L477.2,863.9 L472.6,862.7 L469.0,861.8 L466.3,861.2 L464.0,860.7 L461.7,860.1 L458.9,859.3 L455.0,858.2 L449.9,856.6 L443.8,854.8 L437.2,852.7 L430.4,850.5 L423.9,848.2 L417.8,846.0 L412.3,843.8 L407.1,841.4 L402.0,839.1 L397.1,836.7 L392.1,834.3 L387.1,832.1 L381.9,830.0 L376.6,827.9 L371.3,825.8 L366.1,823.8 L361.1,821.8 L356.4,819.8 L352.1,817.8 L348.1,815.7 L344.3,813.7 L340.7,811.7 L337.1,809.7 L333.4,807.6 L329.6,805.5 L325.5,803.3 L321.6,801.0 L317.9,798.9 L314.6,796.8 L312.0,795.0 L310.2,793.3 L308.9,791.7 L308.2,790.2 L307.7,788.9 L307.4,787.8 L307.0,787.0 L306.3,785.4 L305.3,783.3 L304.2,780.8 L303.0,777.8 L301.9,774.4 L301.0,770.7 L300.3,766.9 L299.6,763.2 L299.1,759.1 L298.6,754.1 L298.2,747.9 L298.0,740.0 L297.9,729.8 L298.0,717.6 L298.1,704.1 L298.3,690.1 L298.6,676.5 L298.8,664.0 L299.0,652.6 L299.3,641.7 L299.5,631.2 L299.8,620.8 L300.1,610.5 L300.5,600.0 L300.9,589.5 L301.4,579.0 L301.9,568.6 L302.4,558.1 L303.0,547.6 L303.5,537.0 L304.1,526.3 L304.6,515.5 L305.2,504.6 L305.9,493.7 L306.4,482.9 L307.0,472.0 L307.5,460.9 L308.1,449.5 L308.6,438.0 L309.1,426.9 L309.6,416.5 L310.0,407.0 L310.4,398.2 L310.7,389.9 L310.9,382.2 L311.2,375.4 L311.4,369.7Z" fill="url(#gF)"/>
<g clip-path="url(#cF2)" fill="none" stroke="#021018" stroke-width="1.1">
<clipPath id="cF2"><path d="M311.5,366.0 L314.1,367.0 L317.7,368.5 L321.9,370.2 L326.4,372.0 L330.7,373.7 L334.5,375.2 L337.6,376.4 L340.4,377.5 L343.1,378.5 L345.7,379.5 L348.6,380.5 L351.8,381.5 L355.4,382.6 L359.2,383.7 L363.3,384.8 L367.4,385.8 L371.7,386.8 L376.0,387.8 L380.5,388.7 L385.4,389.5 L390.3,390.4 L395.2,391.1 L399.7,391.8 L403.7,392.4 L407.1,392.9 L410.0,393.3 L412.5,393.6 L415.0,393.9 L417.4,394.3 L420.0,394.7 L422.4,395.2 L424.5,395.8 L426.6,396.4 L429.0,397.0 L432.2,397.7 L436.5,398.5 L442.3,399.4 L449.5,400.5 L457.3,401.7 L465.4,402.9 L473.2,403.9 L480.0,404.8 L485.8,405.5 L490.9,406.0 L495.6,406.4 L500.3,406.7 L505.3,407.1 L511.0,407.5 L517.3,408.0 L524.0,408.5 L531.0,409.0 L538.2,409.5 L545.6,410.0 L553.0,410.5 L560.5,411.0 L568.3,411.4 L576.1,411.8 L584.1,412.3 L592.1,412.6 L600.0,413.0 L608.1,413.3 L616.4,413.6 L624.7,413.9 L632.9,414.1 L640.7,414.3 L648.0,414.5 L655.1,414.6 L662.2,414.8 L669.0,414.8 L675.1,414.9 L680.2,415.0 L684.0,415.0 L683.0,423.4 L681.7,435.1 L680.2,448.9 L678.5,463.7 L676.7,478.4 L675.0,492.0 L673.3,504.4 L671.5,516.7 L669.7,528.8 L667.9,541.0 L666.1,553.4 L664.4,566.0 L662.8,579.0 L661.3,592.3 L659.9,605.8 L658.4,619.3 L656.8,632.7 L655.0,645.7 L652.9,658.8 L650.6,672.1 L648.1,685.3 L645.7,698.0 L643.4,709.7 L641.3,720.0 L639.5,728.6 L637.8,735.6 L636.3,741.6 L634.8,747.3 L633.4,753.3 L632.0,760.0 L630.6,767.8 L629.2,776.1 L627.9,784.7 L626.5,793.1 L625.3,801.0 L624.0,808.0 L622.9,813.9 L621.9,819.0 L620.9,823.6 L619.8,827.9 L618.6,832.3 L617.0,837.0 L615.2,842.2 L613.3,847.7 L611.1,853.2 L608.7,858.5 L606.1,863.4 L603.0,867.5 L599.2,870.9 L594.6,873.8 L589.6,876.2 L584.9,878.1 L580.8,879.7 L578.0,881.0 L573.9,880.7 L568.3,880.4 L561.6,879.9 L554.4,879.4 L547.3,878.7 L540.8,878.0 L534.8,877.1 L529.0,876.1 L523.2,875.0 L517.4,873.8 L511.7,872.6 L506.0,871.3 L500.2,869.9 L494.2,868.4 L488.2,866.9 L482.5,865.3 L477.2,863.9 L472.6,862.7 L469.0,861.8 L466.3,861.2 L464.0,860.7 L461.7,860.1 L458.9,859.3 L455.0,858.2 L449.9,856.6 L443.8,854.8 L437.2,852.7 L430.4,850.5 L423.9,848.2 L417.8,846.0 L412.3,843.8 L407.1,841.4 L402.0,839.1 L397.1,836.7 L392.1,834.3 L387.1,832.1 L381.9,830.0 L376.6,827.9 L371.3,825.8 L366.1,823.8 L361.1,821.8 L356.4,819.8 L352.1,817.8 L348.1,815.7 L344.3,813.7 L340.7,811.7 L337.1,809.7 L333.4,807.6 L329.6,805.5 L325.5,803.3 L321.6,801.0 L317.9,798.9 L314.6,796.8 L312.0,795.0 L310.2,793.3 L308.9,791.7 L308.2,790.2 L307.7,788.9 L307.4,787.8 L307.0,787.0 L306.3,785.4 L305.3,783.3 L304.2,780.8 L303.0,777.8 L301.9,774.4 L301.0,770.7 L300.3,766.9 L299.6,763.2 L299.1,759.1 L298.6,754.1 L298.2,747.9 L298.0,740.0 L297.9,729.8 L298.0,717.6 L298.1,704.1 L298.3,690.1 L298.6,676.5 L298.8,664.0 L299.0,652.6 L299.3,641.7 L299.5,631.2 L299.8,620.8 L300.1,610.5 L300.5,600.0 L300.9,589.5 L301.4,579.0 L301.9,568.6 L302.4,558.1 L303.0,547.6 L303.5,537.0 L304.1,526.3 L304.6,515.5 L305.2,504.6 L305.9,493.7 L306.4,482.9 L307.0,472.0 L307.5,460.9 L308.1,449.5 L308.6,438.0 L309.1,426.9 L309.6,416.5 L310.0,407.0 L310.4,398.2 L310.7,389.9 L310.9,382.2 L311.2,375.4 L311.4,369.7Z"/></clipPath>
<path d="M290.0,399.0 L291.1,399.4 L292.4,399.9 L294.0,400.5 L295.7,401.1 L297.6,401.8 L299.6,402.6 L301.7,403.4 L303.9,404.2 L306.0,405.1 L308.0,406.0 L310.0,406.9 L312.0,407.9 L313.9,409.0 L315.9,410.1 L318.0,411.2 L320.1,412.3 L322.4,413.5 L324.8,414.7 L327.3,415.8 L330.0,417.0 L332.9,418.2 L335.9,419.4 L339.1,420.6 L342.4,421.8 L345.8,423.1 L349.3,424.3 L352.9,425.5 L356.6,426.7 L360.3,427.9 L364.0,429.0 L367.7,430.1 L371.4,431.1 L375.0,432.1 L378.7,433.1 L382.6,434.1 L386.5,435.1 L390.7,436.1 L395.2,437.0 L399.9,438.0 L405.0,439.0 L410.5,440.0 L416.4,441.0 L422.6,442.1 L429.0,443.1 L435.7,444.1 L442.5,445.2 L449.4,446.2 L456.3,447.1 L463.2,448.1 L470.0,449.0 L476.8,449.9 L483.8,450.7 L490.9,451.6 L498.1,452.4 L505.3,453.1 L512.5,453.9 L519.6,454.6 L526.6,455.4 L533.4,456.1 L540.0,456.8 L546.3,457.5 L552.4,458.2 L558.3,458.9 L564.0,459.6 L569.7,460.3 L575.4,460.9 L581.2,461.5 L587.2,462.1 L593.4,462.6 L600.0,463.0 L607.0,463.3 L614.5,463.6 L622.3,463.8 L630.4,463.9 L638.4,464.0 L646.4,464.1 L654.2,464.2 L661.7,464.3 L668.6,464.4 L675.0,464.5 L680.9,464.7 L686.6,464.8 L692.1,465.0 L697.3,465.2 L702.2,465.3 L706.7,465.5 L710.8,465.7 L714.4,465.8 L717.5,465.9 L720.0,466.0 M290.0,463.0 L290.9,463.5 L292.1,464.2 L293.4,464.9 L294.9,465.8 L296.5,466.7 L298.3,467.7 L300.1,468.7 L302.1,469.8 L304.0,470.9 L306.0,472.0 L308.0,473.1 L310.0,474.3 L312.2,475.6 L314.3,476.9 L316.6,478.2 L318.9,479.6 L321.4,480.9 L324.0,482.3 L326.7,483.7 L329.5,485.0 L332.4,486.3 L335.4,487.7 L338.5,489.1 L341.7,490.5 L345.0,491.9 L348.5,493.2 L352.1,494.6 L355.9,496.0 L359.8,497.4 L364.0,498.7 L368.4,500.0 L373.1,501.4 L378.0,502.7 L383.0,504.0 L388.2,505.4 L393.5,506.7 L398.9,507.9 L404.3,509.2 L409.7,510.5 L415.0,511.7 L420.3,512.9 L425.5,514.1 L430.7,515.2 L436.0,516.4 L441.3,517.5 L446.7,518.6 L452.3,519.7 L458.0,520.8 L463.9,521.9 L470.0,523.0 L476.4,524.1 L483.2,525.2 L490.2,526.4 L497.4,527.5 L504.7,528.7 L512.0,529.8 L519.3,530.8 L526.4,531.8 L533.3,532.8 L540.0,533.6 L546.4,534.4 L552.5,535.1 L558.5,535.7 L564.4,536.3 L570.2,536.8 L576.0,537.3 L581.9,537.8 L587.8,538.2 L593.8,538.6 L600.0,539.0 L606.4,539.4 L613.0,539.7 L619.7,540.0 L626.5,540.2 L633.4,540.4 L640.2,540.6 L646.9,540.8 L653.5,541.0 L659.9,541.1 L666.0,541.3 L672.1,541.4 L678.4,541.6 L684.8,541.6 L691.1,541.7 L697.1,541.8 L702.9,541.8 L708.1,541.9 L712.8,541.9 L716.8,542.0 L720.0,542.0 M290.0,529.0 L290.8,529.4 L291.7,529.9 L292.7,530.6 L293.9,531.2 L295.2,532.0 L296.6,532.8 L298.2,533.7 L299.9,534.6 L301.7,535.6 L303.6,536.7 L305.7,537.8 L307.9,539.0 L310.2,540.3 L312.7,541.7 L315.2,543.1 L317.9,544.5 L320.7,546.0 L323.6,547.5 L326.5,549.0 L329.5,550.5 L332.5,552.0 L335.6,553.6 L338.7,555.3 L341.9,557.0 L345.2,558.6 L348.6,560.3 L352.2,562.0 L355.9,563.7 L359.8,565.4 L364.0,567.0 L368.4,568.6 L373.1,570.2 L378.0,571.8 L383.0,573.5 L388.2,575.1 L393.5,576.6 L398.9,578.2 L404.3,579.7 L409.7,581.1 L415.0,582.5 L420.3,583.8 L425.5,585.0 L430.7,586.2 L436.0,587.3 L441.3,588.4 L446.7,589.5 L452.3,590.5 L458.0,591.6 L463.9,592.8 L470.0,594.0 L476.4,595.3 L483.2,596.7 L490.2,598.1 L497.4,599.6 L504.7,601.0 L512.0,602.4 L519.3,603.8 L526.4,605.1 L533.3,606.3 L540.0,607.3 L546.4,608.2 L552.7,609.0 L558.8,609.6 L564.9,610.2 L570.8,610.8 L576.7,611.2 L582.5,611.7 L588.4,612.1 L594.2,612.6 L600.0,613.0 L605.8,613.4 L611.5,613.9 L617.1,614.2 L622.7,614.6 L628.3,615.0 L633.9,615.3 L639.6,615.6 L645.3,615.9 L651.1,616.2 L657.0,616.5 L663.3,616.8 L670.2,617.1 L677.4,617.4 L684.8,617.7 L692.1,618.0 L699.0,618.2 L705.5,618.5 L711.3,618.7 L716.2,618.9 L720.0,619.0 M285.0,591.0 L285.9,591.6 L286.9,592.2 L288.2,593.0 L289.6,593.9 L291.2,594.9 L292.8,596.0 L294.6,597.1 L296.4,598.3 L298.2,599.4 L300.0,600.6 L301.8,601.8 L303.5,603.0 L305.3,604.3 L307.2,605.6 L309.1,607.0 L311.1,608.4 L313.3,609.8 L315.6,611.3 L318.2,612.8 L321.0,614.4 L324.0,616.0 L327.2,617.6 L330.6,619.3 L334.1,621.1 L337.8,622.8 L341.7,624.6 L345.7,626.4 L350.0,628.3 L354.4,630.1 L359.0,632.0 L363.9,633.9 L369.1,636.0 L374.5,638.1 L380.2,640.2 L385.9,642.3 L391.8,644.4 L397.7,646.5 L403.6,648.4 L409.4,650.3 L415.0,652.0 L420.5,653.5 L425.8,655.0 L431.1,656.3 L436.4,657.5 L441.6,658.6 L447.0,659.7 L452.4,660.9 L458.1,662.1 L463.9,663.3 L470.0,664.6 L476.4,666.0 L483.2,667.6 L490.2,669.2 L497.4,670.8 L504.7,672.4 L512.0,674.0 L519.3,675.6 L526.4,677.0 L533.3,678.3 L540.0,679.5 L546.5,680.5 L552.9,681.4 L559.2,682.2 L565.4,682.9 L571.5,683.5 L577.5,684.1 L583.3,684.6 L589.1,685.1 L594.6,685.5 L600.0,686.0 L605.0,686.4 L609.6,686.8 L613.9,687.1 L618.1,687.3 L622.1,687.5 L626.3,687.8 L630.6,688.0 L635.2,688.2 L640.3,688.4 L646.0,688.7 L652.6,689.0 L660.2,689.4 L668.5,689.7 L677.1,690.1 L685.9,690.5 L694.4,690.9 L702.4,691.2 L709.5,691.5 L715.5,691.8 L720.0,692.0 M288.0,652.0 L288.7,652.7 L289.7,653.6 L290.8,654.7 L292.0,655.9 L293.4,657.2 L294.7,658.6 L296.1,659.9 L297.4,661.1 L298.6,662.3 L299.6,663.3 L300.4,664.2 L301.1,664.9 L301.7,665.6 L302.3,666.2 L302.8,666.8 L303.3,667.4 L303.9,668.0 L304.6,668.7 L305.5,669.4 L306.5,670.2 L307.7,671.1 L309.1,672.0 L310.5,673.0 L312.1,674.0 L313.8,675.1 L315.5,676.1 L317.2,677.2 L319.0,678.4 L320.8,679.5 L322.6,680.6 L324.4,681.8 L326.3,683.0 L328.3,684.2 L330.3,685.5 L332.3,686.8 L334.4,688.1 L336.4,689.4 L338.4,690.5 L340.3,691.7 L342.2,692.7 L344.1,693.6 L345.9,694.5 L347.8,695.4 L349.7,696.2 L351.5,696.9 L353.3,697.6 L355.0,698.3 L356.6,698.9 L358.1,699.6 L359.5,700.2 L360.6,700.7 L361.3,701.2 L361.7,701.5 L362.0,701.8 L362.3,702.1 L362.7,702.5 L363.5,702.9 L364.6,703.4 L366.3,704.1 L368.7,705.0 L371.8,706.1 L375.4,707.4 L379.6,708.8 L384.1,710.4 L389.0,712.0 L394.1,713.7 L399.3,715.4 L404.6,717.0 L409.9,718.6 L415.0,720.0 L420.2,721.3 L425.5,722.6 L431.0,723.8 L436.6,725.0 L442.3,726.2 L447.9,727.3 L453.6,728.5 L459.2,729.6 L464.7,730.8 L470.0,732.0 L475.2,733.2 L480.5,734.5 L485.7,735.7 L490.8,737.0 L495.9,738.2 L501.0,739.5 L505.9,740.7 L510.7,741.9 L515.4,743.0 L520.0,744.0 L524.2,745.0 L528.1,745.8 L531.6,746.7 L535.0,747.4 L538.4,748.2 L542.0,748.9 L545.7,749.6 L549.9,750.4 L554.6,751.2 L560.0,752.0 L566.0,752.9 L572.6,753.9 L579.6,754.9 L587.0,755.9 L594.7,757.0 L602.6,758.0 L610.7,759.0 L618.8,759.8 L626.9,760.6 L635.0,761.3 L643.5,761.8 L652.7,762.3 L662.4,762.7 L672.4,763.0 L682.2,763.2 L691.6,763.4 L700.4,763.6 L708.3,763.7 L714.9,763.9 L720.0,764.0 M288.0,718.0 L288.6,718.5 L289.5,719.2 L290.5,720.0 L291.6,720.8 L292.8,721.8 L294.0,722.7 L295.2,723.7 L296.4,724.7 L297.5,725.6 L298.5,726.5 L299.4,727.3 L300.2,728.0 L300.9,728.7 L301.6,729.5 L302.2,730.2 L302.9,730.9 L303.7,731.6 L304.5,732.4 L305.4,733.3 L306.5,734.2 L307.7,735.2 L308.9,736.3 L310.2,737.4 L311.6,738.5 L313.1,739.7 L314.6,740.9 L316.2,742.2 L317.8,743.4 L319.4,744.5 L321.1,745.7 L322.8,746.8 L324.7,748.0 L326.6,749.2 L328.6,750.3 L330.6,751.5 L332.6,752.6 L334.6,753.7 L336.6,754.8 L338.5,755.8 L340.3,756.8 L342.0,757.7 L343.7,758.6 L345.3,759.4 L346.8,760.2 L348.4,761.0 L349.9,761.8 L351.5,762.5 L353.1,763.3 L354.7,764.1 L356.4,764.9 L358.1,765.7 L359.8,766.5 L361.4,767.3 L363.1,768.1 L364.8,768.9 L366.6,769.7 L368.5,770.5 L370.5,771.4 L372.7,772.3 L375.0,773.3 L377.4,774.3 L380.0,775.4 L382.5,776.5 L385.2,777.6 L388.0,778.7 L391.0,779.9 L394.2,781.1 L397.5,782.4 L401.1,783.7 L405.0,785.0 L409.1,786.4 L413.3,787.7 L417.7,789.2 L422.4,790.6 L427.2,792.1 L432.2,793.7 L437.5,795.2 L443.1,796.8 L448.9,798.4 L455.0,800.0 L461.6,801.7 L468.8,803.5 L476.4,805.3 L484.4,807.3 L492.5,809.2 L500.6,811.0 L508.6,812.8 L516.2,814.5 L523.4,816.1 L530.0,817.5 L536.0,818.7 L541.7,819.8 L547.0,820.8 L552.1,821.7 L557.0,822.6 L561.7,823.3 L566.3,824.0 L570.8,824.7 L575.4,825.4 L580.0,826.0 L584.4,826.6 L588.3,827.2 L591.9,827.6 L595.4,828.1 L598.9,828.5 L602.7,828.9 L606.8,829.3 L611.6,829.6 L617.1,830.0 L623.6,830.4 L631.5,830.8 L641.0,831.2 L651.7,831.7 L663.0,832.1 L674.5,832.5 L685.8,832.9 L696.5,833.2 L706.0,833.5 L714.0,833.8 L720.0,834.0"/>
<path d="M317.6,361.0 L317.6,360.5 L317.7,358.5 L317.8,355.8 L317.9,352.9 L318.0,350.6 L318.0,349.4 L318.0,350.0 L317.9,353.0 L317.7,359.1 L317.3,369.0 L316.7,383.5 L316.0,402.4 L315.1,424.8 L314.1,449.7 L313.0,476.2 L311.9,503.4 L310.9,530.4 L310.0,556.1 L309.1,579.6 L308.5,600.0 L308.0,618.1 L307.6,635.3 L307.3,651.6 L307.1,667.0 L306.9,681.5 L306.8,695.1 L306.7,707.7 L306.6,719.4 L306.6,730.2 L306.5,740.0 L306.5,748.6 L306.5,756.0 L306.6,762.2 L306.7,767.4 L306.8,771.8 L306.9,775.5 L307.0,778.7 L307.1,781.6 L307.2,784.3 L307.3,787.0 L307.3,789.4 L307.4,791.2 L307.4,792.5 L307.4,793.4 L307.4,793.9 L307.4,794.2 L307.4,794.4 L307.4,794.5 L307.4,794.7 L307.4,795.0 M333.7,369.0 L333.7,368.5 L333.8,366.7 L333.9,364.0 L334.0,361.3 L334.1,359.1 L334.2,357.9 L334.1,358.5 L334.0,361.5 L333.8,367.5 L333.4,377.0 L332.8,391.0 L332.1,409.2 L331.2,430.7 L330.2,454.7 L329.1,480.2 L328.0,506.5 L327.0,532.4 L326.0,557.3 L325.2,580.1 L324.5,600.0 L324.0,617.7 L323.5,634.6 L323.2,650.7 L322.9,665.9 L322.6,680.2 L322.5,693.8 L322.3,706.6 L322.2,718.5 L322.0,729.7 L321.9,740.0 L321.8,749.4 L321.7,757.8 L321.7,765.3 L321.7,771.9 L321.7,777.8 L321.8,783.0 L321.8,787.6 L321.9,791.8 L321.9,795.5 L321.9,799.0 L321.9,801.9 L321.9,804.0 L321.9,805.4 L321.9,806.3 L321.9,806.7 L321.9,806.8 L321.9,806.8 L321.9,806.7 L321.9,806.8 L321.9,807.0 M352.7,376.0 L352.7,375.5 L352.8,373.8 L352.9,371.3 L353.0,368.6 L353.1,366.5 L353.1,365.4 L353.1,366.1 L353.0,369.0 L352.8,374.7 L352.4,384.0 L351.9,397.5 L351.2,415.1 L350.3,435.9 L349.4,459.1 L348.4,483.7 L347.4,509.1 L346.4,534.2 L345.5,558.3 L344.7,580.5 L344.0,600.0 L343.5,617.4 L343.0,634.0 L342.6,649.8 L342.3,664.8 L342.0,679.1 L341.7,692.6 L341.5,705.5 L341.3,717.6 L341.2,729.1 L341.0,740.0 L340.9,750.2 L340.8,759.6 L340.8,768.4 L340.8,776.4 L340.8,783.8 L340.9,790.4 L340.9,796.5 L341.0,801.9 L341.0,806.8 L341.0,811.0 L341.0,814.4 L341.0,816.8 L341.0,818.3 L341.0,819.1 L341.0,819.4 L341.0,819.4 L341.0,819.2 L341.0,818.9 L341.0,818.8 L341.0,819.0 M376.8,383.0 L376.8,382.6 L376.9,380.9 L377.0,378.5 L377.1,376.0 L377.2,373.9 L377.2,372.9 L377.2,373.6 L377.1,376.4 L376.9,382.0 L376.5,391.0 L376.0,404.1 L375.3,421.0 L374.5,441.1 L373.6,463.4 L372.6,487.2 L371.7,511.7 L370.7,536.0 L369.8,559.4 L369.0,581.0 L368.3,600.0 L367.7,617.1 L367.2,633.3 L366.7,648.9 L366.2,663.8 L365.8,677.9 L365.4,691.5 L365.0,704.4 L364.7,716.8 L364.4,728.7 L364.1,740.0 L363.8,750.9 L363.6,761.3 L363.4,771.2 L363.2,780.5 L363.1,789.3 L363.0,797.3 L362.9,804.7 L362.8,811.3 L362.7,817.1 L362.6,822.0 L362.5,825.8 L362.5,828.5 L362.5,830.1 L362.4,830.9 L362.4,831.1 L362.4,830.9 L362.4,830.5 L362.5,830.1 L362.5,829.9 L362.5,830.0 M405.1,388.0 L405.1,387.6 L405.2,386.0 L405.3,383.6 L405.4,381.2 L405.4,379.3 L405.5,378.3 L405.5,378.9 L405.3,381.7 L405.1,387.2 L404.8,396.0 L404.3,408.7 L403.7,425.3 L403.0,444.8 L402.2,466.6 L401.3,489.7 L400.4,513.6 L399.5,537.3 L398.6,560.2 L397.8,581.3 L397.0,600.0 L396.3,616.8 L395.5,632.8 L394.8,648.2 L394.0,662.9 L393.3,676.9 L392.6,690.5 L391.9,703.5 L391.3,716.0 L390.7,728.2 L390.2,740.0 L389.7,751.6 L389.3,763.0 L388.9,774.0 L388.6,784.7 L388.2,794.8 L388.0,804.2 L387.7,812.8 L387.5,820.6 L387.3,827.4 L387.1,833.0 L387.0,837.3 L386.9,840.2 L386.8,841.9 L386.8,842.7 L386.8,842.8 L386.8,842.5 L386.8,841.9 L386.8,841.3 L386.8,840.9 L386.8,841.0 M436.8,391.0 L436.8,390.6 L436.9,389.0 L437.0,386.7 L437.1,384.4 L437.2,382.4 L437.2,381.5 L437.2,382.2 L437.1,384.9 L436.9,390.3 L436.5,399.0 L436.0,411.6 L435.4,427.8 L434.6,447.0 L433.8,468.4 L432.9,491.2 L431.9,514.7 L431.0,538.1 L430.0,560.6 L429.1,581.5 L428.2,600.0 L427.3,616.6 L426.4,632.5 L425.5,647.6 L424.6,662.1 L423.6,676.0 L422.7,689.4 L421.8,702.5 L421.0,715.2 L420.1,727.7 L419.4,740.0 L418.7,752.4 L418.0,764.8 L417.4,777.1 L416.8,789.2 L416.2,800.8 L415.6,811.7 L415.1,821.7 L414.7,830.8 L414.3,838.6 L414.0,845.0 L413.8,849.8 L413.6,852.9 L413.5,854.8 L413.5,855.6 L413.5,855.6 L413.5,855.0 L413.5,854.2 L413.6,853.5 L413.6,853.0 L413.6,853.0 M472.4,395.0 L472.4,394.6 L472.5,393.1 L472.6,390.9 L472.8,388.6 L472.9,386.7 L472.9,385.8 L472.9,386.5 L472.7,389.2 L472.4,394.5 L472.0,403.0 L471.4,415.3 L470.6,431.2 L469.6,450.0 L468.5,470.9 L467.4,493.2 L466.2,516.2 L465.0,539.1 L463.8,561.2 L462.7,581.8 L461.6,600.0 L460.6,616.4 L459.5,632.0 L458.5,647.0 L457.5,661.3 L456.5,675.1 L455.5,688.5 L454.5,701.6 L453.5,714.5 L452.5,727.3 L451.6,740.0 L450.7,753.0 L449.7,766.3 L448.7,779.7 L447.7,792.9 L446.8,805.8 L445.9,817.9 L445.1,829.2 L444.4,839.2 L443.7,847.9 L443.2,855.0 L442.8,860.2 L442.6,863.6 L442.4,865.5 L442.4,866.3 L442.4,866.2 L442.4,865.5 L442.5,864.5 L442.6,863.6 L442.6,863.0 L442.6,863.0 M511.9,399.5 L511.9,399.2 L512.0,397.7 L512.2,395.5 L512.3,393.3 L512.5,391.5 L512.5,390.6 L512.5,391.3 L512.3,394.0 L511.9,399.2 L511.3,407.5 L510.4,419.4 L509.3,434.7 L508.1,452.7 L506.6,472.8 L505.1,494.2 L503.5,516.5 L501.9,538.8 L500.3,560.6 L498.7,581.2 L497.3,600.0 L495.9,617.6 L494.6,635.0 L493.2,652.2 L491.8,669.1 L490.5,685.6 L489.1,701.7 L487.8,717.2 L486.5,732.2 L485.2,746.5 L484.0,760.0 L482.7,773.0 L481.4,785.8 L480.1,798.1 L478.8,809.9 L477.5,821.0 L476.3,831.4 L475.2,840.9 L474.2,849.4 L473.3,856.8 L472.6,863.0 L472.1,867.7 L471.7,870.8 L471.5,872.6 L471.4,873.4 L471.4,873.4 L471.5,872.9 L471.6,872.1 L471.7,871.4 L471.7,870.9 L471.7,871.0 M554.2,402.5 L554.3,402.2 L554.4,400.7 L554.6,398.6 L554.8,396.4 L555.0,394.7 L555.0,393.9 L555.0,394.5 L554.7,397.2 L554.3,402.3 L553.5,410.5 L552.4,422.2 L551.0,437.3 L549.4,454.9 L547.6,474.6 L545.7,495.7 L543.7,517.6 L541.6,539.6 L539.6,561.1 L537.7,581.4 L536.0,600.0 L534.4,617.4 L532.8,634.7 L531.2,651.7 L529.7,668.4 L528.1,684.8 L526.6,700.9 L525.1,716.5 L523.6,731.5 L522.1,746.1 L520.6,760.0 L519.0,773.6 L517.4,787.1 L515.7,800.4 L514.1,813.3 L512.4,825.5 L510.8,837.0 L509.4,847.6 L508.0,857.0 L506.9,865.2 L506.0,872.0 L505.3,877.0 L504.9,880.4 L504.7,882.3 L504.6,883.0 L504.6,883.0 L504.7,882.3 L504.8,881.4 L504.9,880.5 L505.0,879.9 L505.0,879.9 M600.9,405.0 L600.9,404.7 L601.1,403.3 L601.3,401.2 L601.6,399.1 L601.8,397.3 L601.8,396.5 L601.8,397.2 L601.5,399.8 L600.9,404.9 L600.0,413.0 L598.7,424.6 L597.1,439.4 L595.1,456.8 L593.0,476.2 L590.6,497.0 L588.2,518.5 L585.8,540.2 L583.4,561.5 L581.1,581.6 L579.0,600.0 L577.0,617.3 L575.1,634.4 L573.2,651.3 L571.3,668.0 L569.4,684.3 L567.5,700.3 L565.7,715.9 L563.8,731.1 L561.9,745.8 L560.0,760.0 L558.0,774.0 L555.9,788.0 L553.7,802.0 L551.5,815.5 L549.3,828.5 L547.2,840.7 L545.2,852.0 L543.5,862.1 L542.0,870.8 L540.8,878.0 L539.9,883.3 L539.4,886.8 L539.1,888.7 L538.9,889.5 L539.0,889.3 L539.1,888.6 L539.2,887.6 L539.4,886.6 L539.5,885.9 L539.5,885.9 M649.6,406.6 L649.7,406.3 L649.9,404.8 L650.2,402.8 L650.5,400.7 L650.7,398.9 L650.8,398.2 L650.7,398.8 L650.4,401.4 L649.6,406.5 L648.5,414.5 L646.9,426.0 L644.7,440.6 L642.3,457.9 L639.5,477.1 L636.5,497.7 L633.5,519.1 L630.4,540.6 L627.4,561.7 L624.6,581.7 L622.0,600.0 L619.6,617.2 L617.4,634.3 L615.2,651.1 L613.0,667.7 L610.9,684.0 L608.8,700.0 L606.7,715.7 L604.6,730.9 L602.5,745.7 L600.3,760.0 L598.0,774.2 L595.5,788.5 L593.0,802.7 L590.4,816.6 L587.9,830.0 L585.4,842.6 L583.2,854.2 L581.1,864.7 L579.4,873.7 L578.0,881.0 L577.0,886.4 L576.4,889.9 L576.0,891.9 L575.8,892.7 L575.9,892.5 L576.0,891.7 L576.2,890.6 L576.4,889.6 L576.5,888.9 L576.6,888.9"/>
</g>
<path d="M307.0,787.0 L306.6,786.1 L306.1,785.0 L305.5,783.8 L304.9,782.3 L304.2,780.8 L303.5,779.0 L302.8,777.2 L302.1,775.1 L301.5,773.0 L301.0,770.7 L300.6,768.4 L300.1,766.2 L299.8,764.0 L299.4,761.6 L299.1,759.1 L298.8,756.2 L298.5,753.0 L298.3,749.3 L298.1,745.0 L298.0,740.0 L297.9,734.2 L297.9,727.5 L297.9,720.2 L298.0,712.3 L298.1,704.1 L298.2,695.7 L298.4,687.3 L298.5,679.2 L298.7,671.3 L298.8,664.0 L298.9,657.1 L299.1,650.4 L299.2,643.9 L299.4,637.5 L299.5,631.2 L299.7,625.0 L299.9,618.7 L300.1,612.5 L300.3,606.3 L300.5,600.0 L300.7,593.7 L301.0,587.4 L301.3,581.1 L301.6,574.8 L301.9,568.6 L302.2,562.3 L302.5,556.0 L302.8,549.7 L303.2,543.4 L303.5,537.0 L303.8,530.6 L304.2,524.1 L304.5,517.6 L304.9,511.1 L305.2,504.6 L305.6,498.1 L306.0,491.6 L306.3,485.0 L306.7,478.5 L307.0,472.0 L307.3,465.4 L307.7,458.6 L308.0,451.8 L308.3,444.9 L308.6,438.0 L308.9,431.3 L309.2,424.8 L309.5,418.5 L309.8,412.5 L310.0,407.0 L310.2,401.7 L310.4,396.5 L310.6,391.5 L310.8,386.7 L310.9,382.2 L311.1,378.0 L311.2,374.2 L311.3,370.8 L311.4,367.9 L311.5,365.5" fill="none" stroke="#000" stroke-width="2"/>
<path d="M684.0,415.0 L683.5,419.6 L682.8,425.5 L682.0,432.5 L681.1,440.4 L680.2,448.9 L679.1,457.7 L678.1,466.7 L677.0,475.6 L676.0,484.1 L675.0,492.0 L674.0,499.5 L673.0,506.9 L671.9,514.2 L670.8,521.5 L669.7,528.8 L668.6,536.1 L667.5,543.5 L666.5,550.9 L665.4,558.4 L664.4,566.0 L663.4,573.8 L662.5,581.7 L661.6,589.7 L660.8,597.7 L659.9,605.8 L659.0,613.9 L658.1,622.0 L657.1,630.0 L656.1,637.9 L655.0,645.7 L653.8,653.5 L652.5,661.5 L651.1,669.5 L649.6,677.5 L648.1,685.3 L646.7,693.0 L645.2,700.4 L643.8,707.4 L642.5,714.0 L641.3,720.0 L640.2,725.4 L639.1,730.1 L638.1,734.3 L637.2,738.1 L636.3,741.6 L635.4,745.1 L634.6,748.5 L633.7,752.0 L632.9,755.8 L632.0,760.0 L631.1,764.6 L630.3,769.4 L629.5,774.4 L628.7,779.5 L627.9,784.7 L627.1,789.8 L626.3,794.7 L625.5,799.5 L624.8,803.9 L624.0,808.0 L623.3,811.7 L622.6,815.0 L622.0,818.0 L621.5,820.9 L620.9,823.6 L620.3,826.2 L619.6,828.8 L618.8,831.4 L618.0,834.1 L617.0,837.0 L615.9,840.1 L614.8,843.3 L613.7,846.6 L612.4,849.9 L611.1,853.2 L609.7,856.5 L608.2,859.6 L606.6,862.5 L604.9,865.1 L603.0,867.5 L600.8,869.6 L598.3,871.5 L595.5,873.2 L592.6,874.8 L589.6,876.2 L586.7,877.4 L584.0,878.5 L581.6,879.4 L579.5,880.3 L578.0,881.0" fill="none" stroke="#000" stroke-width="2"/>
<path d="M578.0,881.0 L575.8,880.8 L572.9,880.7 L569.5,880.4 L565.7,880.2 L561.6,879.9 L557.3,879.6 L553.0,879.3 L548.7,878.9 L544.6,878.5 L540.8,878.0 L537.2,877.5 L533.7,876.9 L530.1,876.3 L526.6,875.7 L523.2,875.0 L519.7,874.3 L516.3,873.6 L512.8,872.8 L509.4,872.1 L506.0,871.3 L502.5,870.5 L499.0,869.6 L495.4,868.7 L491.8,867.8 L488.2,866.9 L484.8,865.9 L481.4,865.0 L478.2,864.2 L475.3,863.4 L472.6,862.7 L470.3,862.1 L468.4,861.7 L466.8,861.3 L465.4,861.0 L464.0,860.7 L462.7,860.4 L461.2,860.0 L459.5,859.5 L457.5,858.9 L455.0,858.2 L452.0,857.3 L448.7,856.3 L445.1,855.2 L441.2,854.0 L437.2,852.7 L433.2,851.4 L429.1,850.0 L425.1,848.7 L421.3,847.3 L417.8,846.0 L414.5,844.7 L411.2,843.3 L408.1,841.9 L405.1,840.5 L402.0,839.1 L399.1,837.6 L396.1,836.2 L393.1,834.8 L390.1,833.4 L387.1,832.1 L384.0,830.8 L380.8,829.5 L377.6,828.3 L374.5,827.1 L371.3,825.8 L368.1,824.6 L365.0,823.4 L362.0,822.2 L359.2,821.0 L356.4,819.8 L353.8,818.6 L351.3,817.4 L348.9,816.1 L346.6,814.9 L344.3,813.7 L342.1,812.5 L339.9,811.3 L337.8,810.1 L335.6,808.8 L333.4,807.6 L331.1,806.3 L328.8,805.0 L326.3,803.7 L323.9,802.4 L321.6,801.0 L319.3,799.7 L317.2,798.5 L315.2,797.2 L313.5,796.1 L312.0,795.0 L310.8,794.0 L309.9,793.0 L309.1,792.0 L308.6,791.1 L308.2,790.2 L307.9,789.4 L307.6,788.7 L307.4,788.0 L307.2,787.5 L307.0,787.0" fill="none" stroke="#000" stroke-width="1.6"/>
<path d="M363.3,498 Q364,486 376.3,485.7 L502,510.2 Q516.6,513 516.6,527.3 L513.4,600 L490.5,803 Q489,818.5 476.5,819.5 L455,813.7 L417.8,804.5 L371.8,784.5 Q357,779 356.4,765 L359.5,650 Z" fill="none" stroke="#000" stroke-width="2"/>
<rect x="379.0" y="540.4" width="36.2" height="4.2" rx="2.1" transform="rotate(14.4 397.1 542.5)" fill="none" stroke="#000" stroke-width="1.5"/>
<text x="397.0" y="556.0" font-family="Liberation Sans" font-weight="bold" font-size="10" text-anchor="middle" transform="rotate(14.0 397.0 553.0)" fill="#000" stroke="#000" stroke-width="1.5" letter-spacing="-0.5">100ml</text>
<text x="430.6" y="541.5" font-family="Liberation Sans" font-weight="bold" font-size="12" text-anchor="middle" transform="rotate(15.0 430.6 538.5)" fill="#000" stroke="#000" stroke-width="1.5" letter-spacing="-0.5">MAX</text>
<rect x="444.2" y="568.0" width="44.5" height="4.2" rx="2.1" transform="rotate(13.8 466.4 570.1)" fill="none" stroke="#000" stroke-width="1.5"/>
<text x="465.0" y="583.5" font-family="Liberation Sans" font-weight="bold" font-size="10" text-anchor="middle" transform="rotate(14.0 465.0 580.5)" fill="#000" stroke="#000" stroke-width="1.5" letter-spacing="-0.5">32.0oz</text>
<rect x="373.1" y="645.1" width="36.5" height="4.2" rx="2.1" transform="rotate(18.4 391.3 647.2)" fill="none" stroke="#000" stroke-width="1.5"/>
<text x="390.7" y="660.0" font-family="Liberation Sans" font-weight="bold" font-size="10" text-anchor="middle" transform="rotate(16.0 390.7 657.0)" fill="#000" stroke="#000" stroke-width="1.5" letter-spacing="-0.5">100ml</text>
<rect x="437.9" y="676.8" width="42.8" height="4.2" rx="2.1" transform="rotate(13.9 459.2 678.9)" fill="none" stroke="#000" stroke-width="1.5"/>
<text x="458.5" y="691.5" font-family="Liberation Sans" font-weight="bold" font-size="10" text-anchor="middle" transform="rotate(14.0 458.5 688.5)" fill="#000" stroke="#000" stroke-width="1.5" letter-spacing="-0.5">30.0oz</text>
<rect x="368.3" y="748.4" width="35.7" height="4.2" rx="2.1" transform="rotate(21.3 386.1 750.5)" fill="none" stroke="#000" stroke-width="1.5"/>
<text x="385.0" y="762.5" font-family="Liberation Sans" font-weight="bold" font-size="10" text-anchor="middle" transform="rotate(18.0 385.0 759.5)" fill="#000" stroke="#000" stroke-width="1.5" letter-spacing="-0.5">50ml</text>
<rect x="431.8" y="781.5" width="43.1" height="4.2" rx="2.1" transform="rotate(17.1 453.4 783.6)" fill="none" stroke="#000" stroke-width="1.5"/>
<text x="452.0" y="796.5" font-family="Liberation Sans" font-weight="bold" font-size="10" text-anchor="middle" transform="rotate(16.0 452.0 793.5)" fill="#000" stroke="#000" stroke-width="1.5" letter-spacing="-0.5">15.0oz</text>
<path d="M309.5,345.0 L309.5,344.0 L309.4,342.5 L309.4,340.8 L309.4,339.0 L309.6,337.3 L310.0,336.0 L310.6,335.0 L311.3,334.2 L312.2,333.5 L313.2,332.9 L314.5,332.4 L316.0,332.0 L317.0,331.7 L317.3,331.5 L317.8,331.4 L319.4,331.4 L323.2,331.5 L330.0,331.5 L340.7,331.5 L354.7,331.6 L370.9,331.7 L387.9,331.8 L404.7,332.1 L420.0,332.5 L433.7,333.0 L446.7,333.7 L459.4,334.4 L472.2,335.3 L485.6,336.3 L500.0,337.5 L515.8,338.9 L532.8,340.5 L550.3,342.2 L567.8,344.1 L584.5,346.0 L600.0,348.0 L614.4,350.0 L628.3,352.2 L641.6,354.5 L653.9,356.7 L665.1,358.9 L675.0,361.0 L683.3,362.9 L690.0,364.8 L695.7,366.6 L700.6,368.4 L705.2,370.2 L710.0,372.0 L715.0,374.0 L719.9,376.3 L724.4,378.5 L728.5,380.6 L732.0,382.3 L734.5,383.6 L736.0,386.0 L736.0,412.0 L707.0,415.0 L684.0,415.0 L680.2,415.0 L675.1,414.9 L669.0,414.8 L662.2,414.8 L655.1,414.6 L648.0,414.5 L640.7,414.3 L632.9,414.1 L624.7,413.9 L616.4,413.6 L608.1,413.3 L600.0,413.0 L592.1,412.6 L584.1,412.3 L576.1,411.8 L568.3,411.4 L560.5,411.0 L553.0,410.5 L545.6,410.0 L538.2,409.5 L531.0,409.0 L524.0,408.5 L517.3,408.0 L511.0,407.5 L505.3,407.1 L500.3,406.7 L495.6,406.4 L490.9,406.0 L485.8,405.5 L480.0,404.8 L473.2,403.9 L465.4,402.9 L457.3,401.7 L449.5,400.5 L442.3,399.4 L436.5,398.5 L432.2,397.7 L429.0,397.0 L426.6,396.4 L424.5,395.8 L422.4,395.2 L420.0,394.7 L417.4,394.3 L415.0,393.9 L412.5,393.6 L410.0,393.3 L407.1,392.9 L403.7,392.4 L399.7,391.8 L395.2,391.1 L390.3,390.4 L385.4,389.5 L380.5,388.7 L376.0,387.8 L371.7,386.8 L367.4,385.8 L363.3,384.8 L359.2,383.7 L355.4,382.6 L351.8,381.5 L348.6,380.5 L345.7,379.5 L343.1,378.5 L340.4,377.5 L337.6,376.4 L334.5,375.2 L330.7,373.7 L326.4,372.0 L321.9,370.2 L317.7,368.5 L314.1,367.0 L311.5,366.0Z" fill="url(#gR)"/>
<path d="M311.0,341.0 L321.5,342.1 L336.6,343.6 L354.2,345.4 L372.1,347.3 L388.1,348.9 L400.0,350.0 L406.9,350.6 L410.3,350.8 L411.8,350.8 L412.9,350.7 L415.2,350.8 L420.0,351.0 L427.4,351.5 L436.2,352.0 L446.1,352.6 L456.9,353.3 L468.3,354.1 L480.0,355.0 L492.6,356.0 L506.2,357.2 L520.5,358.4 L534.9,359.7 L548.9,361.0 L562.0,362.4 L574.3,363.8 L586.2,365.2 L597.7,366.6 L608.8,368.1 L619.5,369.7 L629.7,371.2 L639.6,372.8 L649.2,374.5 L658.4,376.2 L667.0,377.9 L674.9,379.6 L682.0,381.0 L688.3,382.3 L694.0,383.6 L699.0,384.8 L703.3,385.9 L706.8,386.7 L709.5,387.4 L707.0,388.5 L704.7,388.5 L701.8,388.5 L698.2,388.4 L694.1,388.4 L689.3,388.3 L684.0,388.2 L677.8,388.0 L670.7,387.8 L663.1,387.6 L655.1,387.4 L647.3,387.2 L640.0,387.0 L633.8,387.0 L628.6,387.0 L623.5,387.1 L617.6,387.1 L610.1,387.0 L600.0,386.5 L586.6,385.7 L570.4,384.7 L552.5,383.6 L534.1,382.3 L516.2,380.9 L500.0,379.5 L485.0,378.0 L470.3,376.3 L456.2,374.6 L442.9,372.9 L430.8,371.3 L420.0,369.8 L411.0,368.6 L403.7,367.5 L397.5,366.6 L391.9,365.7 L386.4,364.7 L380.6,363.5 L374.6,362.2 L368.7,360.9 L363.0,359.4 L357.3,357.9 L351.7,356.3 L346.0,354.5 L339.8,352.4 L333.2,349.8 L326.6,347.2 L320.4,344.7 L315.3,342.5 L311.5,341.0Z" fill="url(#gW)"/>
<path d="M311.5,341.0 L315.3,342.5 L320.4,344.7 L326.6,347.2 L333.2,349.8 L339.8,352.4 L346.0,354.5 L351.7,356.3 L357.3,357.9 L363.0,359.4 L368.7,360.9 L374.6,362.2 L380.6,363.5 L386.4,364.7 L391.9,365.7 L397.5,366.6 L403.7,367.5 L411.0,368.6 L420.0,369.8 L430.8,371.3 L442.9,372.9 L456.2,374.6 L470.3,376.3 L485.0,378.0 L500.0,379.5 L516.2,380.9 L534.1,382.3 L552.5,383.6 L570.4,384.7 L586.6,385.7 L600.0,386.5 L610.1,387.0 L617.6,387.1 L623.5,387.1 L628.6,387.0 L633.8,387.0 L640.0,387.0 L647.3,387.2 L655.1,387.4 L663.1,387.6 L670.7,387.8 L677.8,388.0 L684.0,388.2 L689.3,388.3 L694.1,388.4 L698.2,388.4 L701.8,388.5 L704.7,388.5 L707.0,388.5 L707.0,415.0 L684.0,415.0 L680.2,415.0 L675.1,414.9 L669.0,414.8 L662.2,414.8 L655.1,414.6 L648.0,414.5 L640.7,414.3 L632.9,414.1 L624.7,413.9 L616.4,413.6 L608.1,413.3 L600.0,413.0 L592.1,412.6 L584.1,412.3 L576.1,411.8 L568.3,411.4 L560.5,411.0 L553.0,410.5 L545.6,410.0 L538.2,409.5 L531.0,409.0 L524.0,408.5 L517.3,408.0 L511.0,407.5 L505.3,407.1 L500.3,406.7 L495.6,406.4 L490.9,406.0 L485.8,405.5 L480.0,404.8 L473.2,403.9 L465.4,402.9 L457.3,401.7 L449.5,400.5 L442.3,399.4 L436.5,398.5 L432.2,397.7 L429.0,397.0 L426.6,396.4 L424.5,395.8 L422.4,395.2 L420.0,394.7 L417.4,394.3 L415.0,393.9 L412.5,393.6 L410.0,393.3 L407.1,392.9 L403.7,392.4 L399.7,391.8 L395.2,391.1 L390.3,390.4 L385.4,389.5 L380.5,388.7 L376.0,387.8 L371.7,386.8 L367.4,385.8 L363.3,384.8 L359.2,383.7 L355.4,382.6 L351.8,381.5 L348.6,380.5 L345.7,379.5 L343.1,378.5 L340.4,377.5 L337.6,376.4 L334.5,375.2 L330.7,373.7 L326.4,372.0 L321.9,370.2 L317.7,368.5 L314.1,367.0 L311.5,366.0Z" fill="url(#gF)"/>
<path d="M384.6,332.1 L385.1,341.3 M385.1,348.4 L385.6,364.1 M423.0,332.7 L423.5,343.2 M423.5,351.2 L424.0,370.2 M458.5,334.9 L459.0,345.9 M459.0,353.6 L459.5,374.5 M494.0,337.1 L494.5,349.0 M494.5,356.3 L495.0,378.8 M528.6,340.5 L529.1,352.7 M529.1,359.4 L529.6,381.5 M562.0,344.0 L562.5,356.2 M562.5,362.4 L563.0,383.8 M594.8,347.5 L595.3,360.5 M595.3,366.7 L595.8,386.1 M626.0,352.5 L626.5,364.5 M626.5,370.7 L627.0,386.8 M656.0,357.7 L656.5,370.5 M656.5,376.1 L657.0,387.4 M683.4,363.6 L683.9,376.5 M683.9,381.3 L684.4,388.2 M705.8,370.7 L706.3,383.8 M706.3,386.5 L706.8,388.5 M317.0,334.0 L318.0,342.3 M321.0,333.8 L322.0,342.4 M325.0,333.7 L326.0,342.6 M329.0,333.5 L330.0,342.8 M333.0,333.5 L334.0,343.0 M337.0,333.6 L338.0,343.2 M346.0,333.7 L347.0,343.6 M355.0,333.8 L356.0,344.0 M316.8,343.3 L317.3,369.0 M332.9,349.6 L333.4,377.0 M351.9,356.2 L352.4,384.0 M376.0,362.4 L376.5,391.0 M404.3,367.4 L404.8,396.0 M436.0,371.8 L436.5,399.0 M471.5,376.1 L472.0,403.0 M510.8,380.3 L511.3,407.5 M553.0,383.2 L553.5,410.5 M599.5,386.5 L600.0,413.0 M648.0,387.2 L648.5,414.5" stroke="#03121a" stroke-width="1.1" fill="none"/>
<path d="M311.0,338.0 L321.5,338.5 L336.6,339.1 L354.2,339.9 L372.1,340.7 L388.1,341.5 L400.0,342.0 L406.9,342.3 L410.3,342.4 L411.8,342.5 L412.9,342.5 L415.2,342.7 L420.0,343.0 L427.4,343.5 L436.2,344.1 L446.1,344.8 L456.9,345.6 L468.3,346.5 L480.0,347.5 L492.6,348.7 L506.2,350.1 L520.5,351.6 L534.9,353.1 L548.9,354.7 L562.0,356.2 L574.3,357.6 L586.2,359.0 L597.7,360.5 L608.8,361.9 L619.5,363.4 L629.7,365.0 L639.6,366.7 L649.2,368.6 L658.4,370.5 L667.0,372.4 L674.9,374.3 L682.0,376.0 L688.3,377.7 L694.0,379.5 L699.0,381.2 L703.3,382.7 L706.8,384.0 L709.5,385.0 L709.5,387.4 L706.8,386.7 L703.3,385.9 L699.0,384.8 L694.0,383.6 L688.3,382.3 L682.0,381.0 L674.9,379.6 L667.0,377.9 L658.4,376.2 L649.2,374.5 L639.6,372.8 L629.7,371.2 L619.5,369.7 L608.8,368.1 L597.7,366.6 L586.2,365.2 L574.3,363.8 L562.0,362.4 L548.9,361.0 L534.9,359.7 L520.5,358.4 L506.2,357.2 L492.6,356.0 L480.0,355.0 L468.3,354.1 L456.9,353.3 L446.1,352.6 L436.2,352.0 L427.4,351.5 L420.0,351.0 L415.2,350.8 L412.9,350.7 L411.8,350.8 L410.3,350.8 L406.9,350.6 L400.0,350.0 L388.1,348.9 L372.1,347.3 L354.2,345.4 L336.6,343.6 L321.5,342.1 L311.0,341.0Z" fill="#06141a"/>
<path d="M311.0,339.5 L316.6,339.9 L324.2,340.5 L333.3,341.1 L343.5,341.9 L354.2,342.7 L365.1,343.5 L375.6,344.2 L385.2,344.9 L393.5,345.5 L400.0,346.0 L404.6,346.3 L407.8,346.5 L409.8,346.6 L411.0,346.6 L411.8,346.6 L412.4,346.6 L413.2,346.6 L414.5,346.7 L416.7,346.8 L420.0,347.0 L424.3,347.3 L429.1,347.6 L434.4,347.9 L440.1,348.3 L446.1,348.7 L452.5,349.1 L459.1,349.6 L466.0,350.1 L472.9,350.7 L480.0,351.2 L487.4,351.9 L495.2,352.6 L503.4,353.4 L511.9,354.2 L520.5,355.0 L529.2,355.8 L537.8,356.7 L546.2,357.6 L554.3,358.4 L562.0,359.3 L569.4,360.1 L576.7,361.0 L583.8,361.8 L590.8,362.7 L597.7,363.6 L604.4,364.4 L611.0,365.3 L617.4,366.2 L623.6,367.2 L629.7,368.1 L635.7,369.1 L641.5,370.1 L647.3,371.2 L652.9,372.3 L658.4,373.4 L663.6,374.5 L668.6,375.5 L673.4,376.6 L677.8,377.6 L682.0,378.5 L685.9,379.4 L689.5,380.3 L692.9,381.3 L696.1,382.1 L699.0,383.0 L701.7,383.8 L704.1,384.5 L706.2,385.2 L708.0,385.8 L709.5,386.2" stroke="#6aa8b8" stroke-width="0.8" stroke-dasharray="2 1.5" fill="none" opacity="0.7"/>
<path d="M311.0,338.0 L316.6,338.3 L324.2,338.6 L333.3,339.0 L343.5,339.5 L354.2,339.9 L365.1,340.4 L375.6,340.9 L385.2,341.3 L393.5,341.7 L400.0,342.0 L404.6,342.2 L407.8,342.3 L409.8,342.4 L411.0,342.4 L411.8,342.5 L412.4,342.5 L413.2,342.5 L414.5,342.6 L416.7,342.8 L420.0,343.0 L424.3,343.3 L429.1,343.6 L434.4,344.0 L440.1,344.3 L446.1,344.8 L452.5,345.2 L459.1,345.7 L466.0,346.3 L472.9,346.9 L480.0,347.5 L487.4,348.2 L495.2,349.0 L503.4,349.8 L511.9,350.7 L520.5,351.6 L529.2,352.5 L537.8,353.5 L546.2,354.4 L554.3,355.3 L562.0,356.2 L569.4,357.1 L576.7,357.9 L583.8,358.8 L590.8,359.6 L597.7,360.5 L604.4,361.3 L611.0,362.2 L617.4,363.1 L623.6,364.0 L629.7,365.0 L635.7,366.0 L641.5,367.1 L647.3,368.2 L652.9,369.3 L658.4,370.5 L663.6,371.6 L668.6,372.8 L673.4,373.9 L677.8,375.0 L682.0,376.0 L685.9,377.0 L689.5,378.1 L692.9,379.1 L696.1,380.2 L699.0,381.2 L701.7,382.1 L704.1,383.0 L706.2,383.8 L708.0,384.5 L709.5,385.0" stroke="#000" stroke-width="1.8" fill="none"/>
<path d="M311.0,341.0 L316.6,341.6 L324.2,342.4 L333.3,343.3 L343.5,344.3 L354.2,345.4 L365.1,346.5 L375.6,347.6 L385.2,348.6 L393.5,349.4 L400.0,350.0 L404.6,350.4 L407.8,350.7 L409.8,350.8 L411.0,350.8 L411.8,350.8 L412.4,350.8 L413.2,350.7 L414.5,350.7 L416.7,350.8 L420.0,351.0 L424.3,351.3 L429.1,351.6 L434.4,351.9 L440.1,352.2 L446.1,352.6 L452.5,353.0 L459.1,353.5 L466.0,353.9 L472.9,354.4 L480.0,355.0 L487.4,355.6 L495.2,356.2 L503.4,356.9 L511.9,357.6 L520.5,358.4 L529.2,359.2 L537.8,360.0 L546.2,360.8 L554.3,361.6 L562.0,362.4 L569.4,363.2 L576.7,364.1 L583.8,364.9 L590.8,365.8 L597.7,366.6 L604.4,367.5 L611.0,368.4 L617.4,369.4 L623.6,370.3 L629.7,371.2 L635.7,372.2 L641.5,373.2 L647.3,374.2 L652.9,375.2 L658.4,376.2 L663.6,377.3 L668.6,378.3 L673.4,379.2 L677.8,380.2 L682.0,381.0 L685.9,381.8 L689.5,382.6 L692.9,383.4 L696.1,384.1 L699.0,384.8 L701.7,385.5 L704.1,386.1 L706.2,386.6 L708.0,387.0 L709.5,387.4" stroke="#000" stroke-width="1.8" fill="none"/>
<path d="M311.5,341.0 L313.6,341.8 L316.2,342.9 L319.3,344.2 L322.8,345.6 L326.6,347.2 L330.5,348.8 L334.6,350.4 L338.5,351.9 L342.4,353.3 L346.0,354.5 L349.4,355.6 L352.8,356.6 L356.2,357.6 L359.6,358.6 L363.0,359.4 L366.4,360.3 L369.9,361.1 L373.4,361.9 L376.9,362.7 L380.6,363.5 L384.2,364.2 L387.5,364.9 L390.8,365.5 L394.1,366.1 L397.5,366.6 L401.1,367.2 L405.0,367.7 L409.4,368.4 L414.4,369.0 L420.0,369.8 L426.3,370.6 L433.1,371.6 L440.4,372.5 L448.1,373.6 L456.2,374.6 L464.6,375.7 L473.3,376.7 L482.1,377.7 L491.0,378.6 L500.0,379.5 L509.5,380.3 L519.7,381.2 L530.4,382.0 L541.4,382.8 L552.5,383.6 L563.4,384.3 L573.8,385.0 L583.5,385.6 L592.3,386.1 L600.0,386.5 L606.4,386.8 L611.8,387.0 L616.3,387.1 L620.1,387.1 L623.5,387.1 L626.6,387.1 L629.6,387.0 L632.7,387.0 L636.1,387.0 L640.0,387.0 L644.3,387.1 L648.9,387.2 L653.6,387.3 L658.3,387.5 L663.1,387.6 L667.7,387.8 L672.2,387.9 L676.5,388.0 L680.4,388.1 L684.0,388.2 L687.3,388.3 L690.3,388.3 L693.2,388.4 L695.8,388.4 L698.2,388.4 L700.5,388.4 L702.5,388.5 L704.2,388.5 L705.7,388.5 L707.0,388.5" stroke="#000" stroke-width="2.6" fill="none"/>
<path d="M311.5,357.0 L313.8,357.9 L316.9,359.1 L320.5,360.5 L324.6,362.1 L329.0,363.7 L333.5,365.4 L337.9,367.1 L342.2,368.6 L346.1,370.0 L349.5,371.1 L352.5,372.0 L355.1,372.7 L357.6,373.3 L360.0,373.8 L362.2,374.2 L364.4,374.6 L366.5,375.0 L368.8,375.4 L371.2,375.8 L373.7,376.3 L376.4,376.9 L379.3,377.4 L382.4,378.0 L385.4,378.6 L388.5,379.3 L391.6,379.9 L394.5,380.4 L397.4,381.0 L400.1,381.5 L402.5,382.0 L404.5,382.4 L406.0,382.7 L407.2,383.0 L408.3,383.3 L409.3,383.5 L410.5,383.8 L412.0,384.1 L414.0,384.5 L416.6,384.9 L420.0,385.5 L424.0,386.2 L428.3,387.0 L433.0,387.9 L438.1,388.9 L443.6,389.9 L449.6,391.0 L456.3,392.0 L463.5,393.0 L471.4,394.0 L480.0,394.9 L489.7,395.8 L500.7,396.6 L512.7,397.5 L525.4,398.4 L538.5,399.2 L551.7,400.0 L564.7,400.8 L577.3,401.4 L589.2,402.0 L600.0,402.5 L610.3,402.9 L620.5,403.2 L630.6,403.3 L640.4,403.5 L649.8,403.5 L658.6,403.6 L666.6,403.6 L673.7,403.6 L679.7,403.6 L684.6,403.6" stroke="#000" stroke-width="1.1" fill="none"/>
<path d="M311.5,366.0 L312.9,366.6 L314.7,367.3 L316.9,368.2 L319.3,369.2 L321.9,370.2 L324.6,371.3 L327.3,372.4 L329.9,373.4 L332.3,374.4 L334.5,375.2 L336.4,375.9 L338.2,376.6 L339.9,377.3 L341.5,377.9 L343.1,378.5 L344.7,379.1 L346.3,379.7 L348.0,380.3 L349.8,380.9 L351.8,381.5 L353.9,382.1 L356.1,382.8 L358.4,383.4 L360.8,384.1 L363.3,384.8 L365.7,385.4 L368.3,386.0 L370.8,386.6 L373.4,387.2 L376.0,387.8 L378.7,388.3 L381.5,388.9 L384.4,389.4 L387.4,389.9 L390.3,390.4 L393.3,390.8 L396.1,391.2 L398.8,391.7 L401.4,392.0 L403.7,392.4 L405.8,392.7 L407.7,393.0 L409.4,393.2 L411.0,393.4 L412.5,393.6 L414.0,393.8 L415.5,394.0 L416.9,394.2 L418.4,394.4 L420.0,394.7 L421.5,395.0 L422.9,395.3 L424.1,395.7 L425.3,396.0 L426.6,396.4 L427.9,396.7 L429.6,397.1 L431.5,397.6 L433.8,398.0 L436.5,398.5 L439.8,399.0 L443.7,399.7 L448.0,400.3 L452.6,401.0 L457.3,401.7 L462.2,402.4 L467.0,403.1 L471.7,403.7 L476.0,404.3 L480.0,404.8 L483.6,405.2 L486.8,405.6 L489.9,405.9 L492.8,406.1 L495.6,406.4 L498.4,406.6 L501.3,406.8 L504.3,407.0 L507.5,407.2 L511.0,407.5 L514.7,407.8 L518.6,408.1 L522.6,408.4 L526.8,408.7 L531.0,409.0 L535.3,409.3 L539.7,409.6 L544.1,409.9 L548.5,410.2 L553.0,410.5 L557.5,410.8 L562.1,411.0 L566.7,411.3 L571.4,411.6 L576.1,411.8 L580.9,412.1 L585.7,412.3 L590.5,412.6 L595.2,412.8 L600.0,413.0 L604.8,413.2 L609.7,413.4 L614.7,413.6 L619.7,413.7 L624.7,413.9 L629.6,414.0 L634.5,414.2 L639.2,414.3 L643.7,414.4 L648.0,414.5 L652.2,414.6 L656.5,414.7 L660.8,414.7 L665.0,414.8 L669.0,414.8 L672.8,414.9 L676.2,414.9 L679.3,414.9 L681.9,415.0 L684.0,415.0" stroke="#000" stroke-width="2.4" fill="none"/>
<path d="M309.5,345.0 L309.5,344.4 L309.5,343.7 L309.4,342.8 L309.4,341.8 L309.4,340.8 L309.4,339.7 L309.4,338.6 L309.5,337.6 L309.7,336.7 L310.0,336.0 L310.3,335.4 L310.7,334.8 L311.1,334.3 L311.6,333.9 L312.2,333.5 L312.8,333.1 L313.4,332.8 L314.2,332.5 L315.1,332.2 L316.0,332.0 L316.7,331.8 L317.1,331.7 L317.2,331.5 L317.4,331.5 L317.8,331.4 L318.5,331.4 L320.0,331.4 L322.2,331.4 L325.5,331.5 L330.0,331.5 L336.0,331.5 L343.3,331.5 L351.7,331.6 L361.0,331.6 L370.9,331.7 L381.1,331.7 L391.3,331.9 L401.4,332.0 L411.1,332.2 L420.0,332.5 L428.3,332.8 L436.3,333.2 L444.1,333.5 L451.8,333.9 L459.4,334.4 L467.0,334.9 L474.8,335.5 L482.9,336.1 L491.2,336.8 L500.0,337.5 L509.3,338.3 L519.1,339.2 L529.3,340.2 L539.8,341.2 L550.3,342.2 L560.8,343.4 L571.2,344.5 L581.3,345.7 L590.9,346.8 L600.0,348.0 L608.7,349.2 L617.2,350.5 L625.6,351.8 L633.7,353.1 L641.6,354.5 L649.1,355.8 L656.2,357.2 L663.0,358.5 L669.2,359.8 L675.0,361.0 L680.2,362.2 L684.7,363.3 L688.8,364.4 L692.4,365.5 L695.7,366.6 L698.7,367.7 L701.5,368.7 L704.3,369.8 L707.1,370.9 L710.0,372.0 L713.0,373.2 L716.0,374.5 L718.9,375.8 L721.7,377.2 L724.4,378.5 L727.0,379.8 L729.3,381.0 L731.3,382.0 L733.1,382.9 L734.5,383.6" stroke="#000" stroke-width="2.6" fill="none"/>
<path d="M309.5,345 L309.8,362 Q310,366 312,366" stroke="#000" stroke-width="2" fill="none"/>
<path d="M684,388.6 L707,389 L705,415 L684,415Z" fill="#58aed0"/>
<path d="M690,389 L689,415 M696,389 L695,415 M702,389 L701,415 M684,396 L706,396 M684,403 L706,403 M684,409 L706,409" stroke="#03121a" stroke-width="1" fill="none"/>
<path d="M706,383 L726,386 L736,386 L736,412 L729,413 L705,415 Z" fill="#0c1f28"/>
<path d="M727,386 L736,386 L736,411 L728,412 Z" fill="#2c7390"/>
<path d="M710,385 L709,414 M714,386 L713,414 M718,386 L717,414 M722,386 L721,413 M731,386 L731,412 M727,386 L728,412" stroke="#000" stroke-width="0.8"/>
<path d="M734.5,383.6 L736.5,386 L736.5,412 L731,414" stroke="#000" stroke-width="1.8" fill="none"/>
<path d="M727,473.6 L755,478.8 Q761.2,480.2 761.2,487 L758.4,568.7 Q758,575.6 752.6,575.6 L723.8,567.5 L726,500 Z" fill="#5cb6c8" stroke="#000" stroke-width="1.7"/>
<path d="M727.5,477.5 L753.5,482 Q756.8,483 756.6,487 L754.2,571" fill="none" stroke="#06161e" stroke-width="1.1"/>
<path d="M743.4,527.2 L754.3,529" stroke="#02141c" stroke-width="0.9"/>
<path d="M727.5,499 Q727.5,491 736,491 Q744.5,491 744.5,499 L744.3,553 Q744.3,560.6 735.8,560.6 Q727.3,560.6 727.3,553 Z" fill="#0e2630"/>
<path d="M729.3,499.5 Q729.3,493 736,493 Q742.7,493 742.7,499.5 L742.5,552.5 Q742.5,558.8 735.8,558.8 Q729.1,558.8 729.1,552.5 Z" fill="none" stroke="#3f8ea6" stroke-width="0.8"/>
<path d="M733,500 Q733,495.3 737.4,495.3 Q741.8,495.3 741.8,500 L741.6,550 Q741.6,554.3 737.3,554.3 Q733,554.3 733,550 Z" fill="#fff" stroke="#000" stroke-width="1"/>
</svg>
</body></html>
